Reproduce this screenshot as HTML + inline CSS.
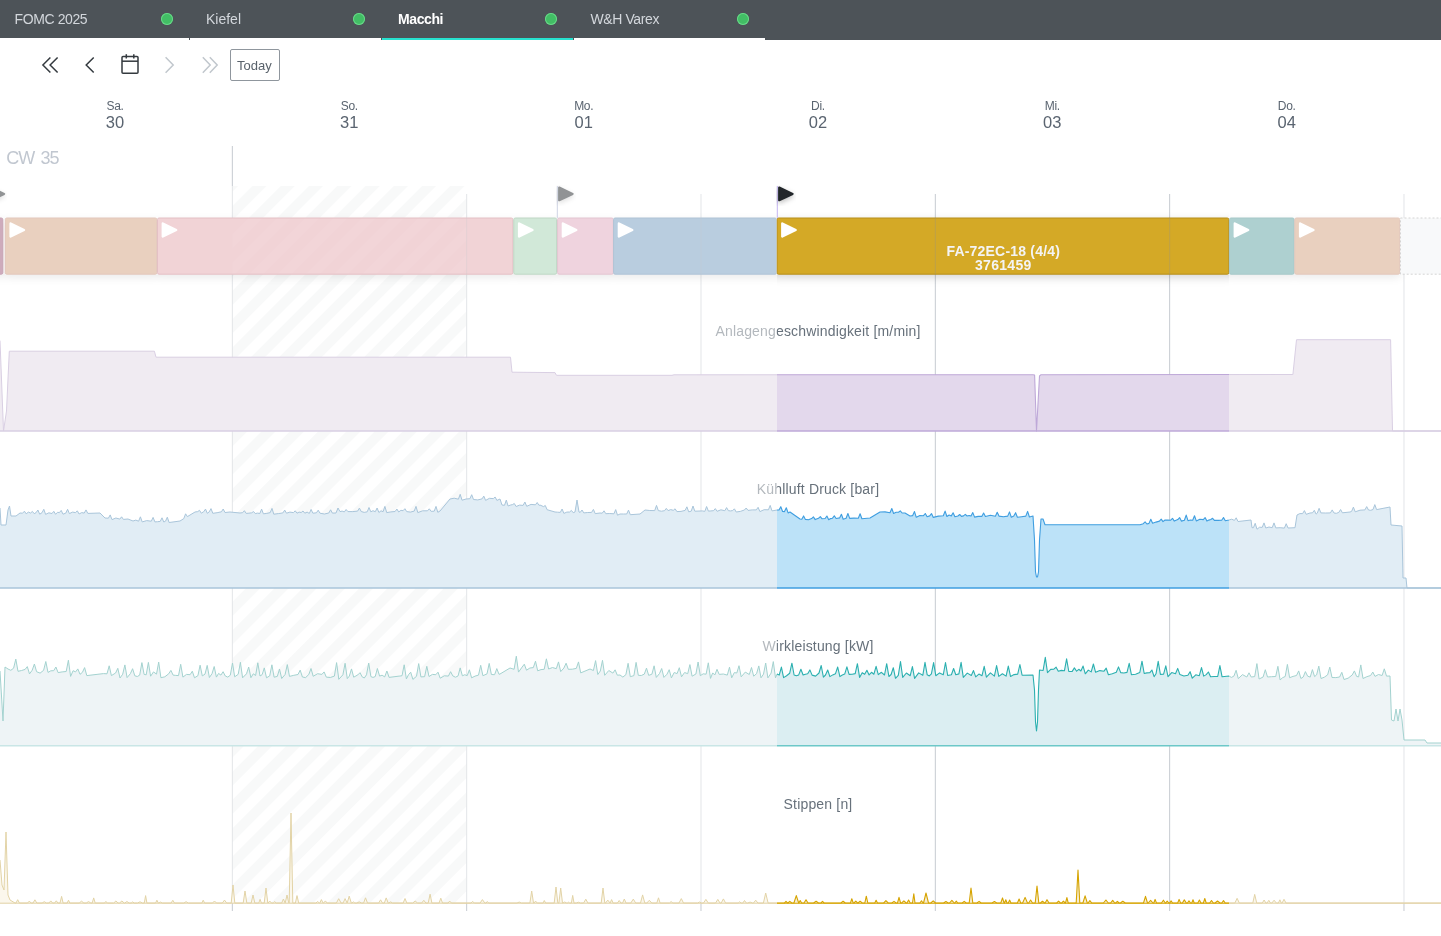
<!DOCTYPE html>
<html><head><meta charset="utf-8"><style>
html,body{margin:0;padding:0;}
body{will-change:transform;}
body{width:1441px;height:936px;overflow:hidden;position:relative;background:#fff;font-family:"Liberation Sans",sans-serif;}
.hdr{position:absolute;left:0;top:0;width:1441px;height:40px;background:#4d5358;}
.tab{position:absolute;top:0;height:38px;border-bottom:2px solid #fff;}
.tab.act{border-bottom-color:#27e2cf;}
.tt{position:absolute;top:11px;font-size:14px;line-height:16px;color:#d3d7dc;white-space:nowrap;letter-spacing:-0.4px;}
.act .tt{color:#fff;font-weight:bold;}
.dot{position:absolute;top:13px;width:12px;height:12px;border-radius:50%;background:#42be65;box-shadow:inset 0 0 0 1px #6ad88a;}
.dn{position:absolute;width:60px;text-align:center;color:#5a6470;white-space:nowrap;}
.dn1{top:99.5px;font-size:12px;line-height:13px;letter-spacing:-0.3px;}
.dn2{top:113.3px;font-size:16.5px;line-height:18px;}
</style></head><body>
<div class="hdr">
<div class="tab" style="left:0;width:189px"><span class="tt" style="left:14.6px">FOMC 2025</span><span class="dot" style="left:161px"></span></div>
<div class="tab" style="left:190px;width:191px"><span class="tt" style="left:16px;letter-spacing:0">Kiefel</span><span class="dot" style="left:163px"></span></div>
<div class="tab act" style="left:382px;width:191px"><span class="tt" style="left:16px">Macchi</span><span class="dot" style="left:163px"></span></div>
<div class="tab" style="left:574px;width:191px"><span class="tt" style="left:16.5px">W&amp;H Varex</span><span class="dot" style="left:163px"></span></div>
</div>
<svg width="300" height="50" viewBox="0 40 300 50" style="position:absolute;left:0;top:40px">
<g fill="none" stroke="#343a3f" stroke-width="1.5" stroke-linecap="butt" stroke-linejoin="miter">
<polyline points="50.4,57.5 42.9,65 50.4,72.5"/>
<polyline points="57.6,57.5 50.1,65 57.6,72.5"/>
<polyline points="93.7,57.5 86.2,65 93.7,72.5"/>
<rect x="122" y="56.5" width="16" height="16.8" rx="1"/>
<line x1="122" y1="61.2" x2="138" y2="61.2"/>
<line x1="126.3" y1="54.2" x2="126.3" y2="58.5"/>
<line x1="133.8" y1="54.2" x2="133.8" y2="58.5"/>
</g>
<g fill="none" stroke="#c1c7cd" stroke-width="1.5">
<polyline points="165.6,57.3 173.2,65 165.6,72.7"/>
<polyline points="202.8,57.3 210.2,65 202.8,72.7"/>
<polyline points="209.8,57.3 217.2,65 209.8,72.7"/>
</g>
<rect x="230.5" y="49.5" width="49" height="31" rx="1.5" fill="#fff" stroke="#8f969d" stroke-width="1"/>
<text x="237" y="69.8" font-family="Liberation Sans" font-size="13" fill="#59626b">Today</text>
</svg>
<div class="dn dn1" style="left:85.0px">Sa.</div><div class="dn dn2" style="left:85.0px">30</div>
<div class="dn dn1" style="left:319.3px">So.</div><div class="dn dn2" style="left:319.3px">31</div>
<div class="dn dn1" style="left:553.7px">Mo.</div><div class="dn dn2" style="left:553.7px">01</div>
<div class="dn dn1" style="left:788.0px">Di.</div><div class="dn dn2" style="left:788.0px">02</div>
<div class="dn dn1" style="left:1022.3px">Mi.</div><div class="dn dn2" style="left:1022.3px">03</div>
<div class="dn dn1" style="left:1256.7px">Do.</div><div class="dn dn2" style="left:1256.7px">04</div>
<div style="position:absolute;left:6.3px;top:148px;font-size:18px;line-height:20px;letter-spacing:-1.1px;word-spacing:2.5px;color:#c1c7d0">CW 35</div>
<svg id="main" width="1441" height="936" viewBox="0 0 1441 936" style="position:absolute;left:0;top:0">
<defs>
<pattern id="hatch" patternUnits="userSpaceOnUse" width="20" height="20" patternTransform="rotate(45)"><rect x="10" y="0" width="10" height="20" fill="#f1f3f3"/></pattern>
<clipPath id="csel"><rect x="777" y="0" width="452" height="936"/></clipPath>
<clipPath id="cun"><rect x="0" y="0" width="777" height="936"/><rect x="1229" y="0" width="212" height="936"/></clipPath>
<filter id="fsh" x="-20%" y="-20%" width="140%" height="160%"><feDropShadow dx="0" dy="2" stdDeviation="2.5" flood-color="#000" flood-opacity="0.25"/></filter>
<filter id="bsh" x="-5%" y="-40%" width="110%" height="200%"><feDropShadow dx="0" dy="3" stdDeviation="4" flood-color="#000" flood-opacity="0.16"/></filter>
</defs>
<rect x="232.5" y="186" width="234" height="717" fill="url(#hatch)"/>
<line x1="232.33" y1="146" x2="232.33" y2="911" stroke="#c6cbd1" stroke-width="1"/>
<line x1="466.66" y1="194" x2="466.66" y2="911" stroke="#c6cbd1" stroke-width="1"/>
<line x1="700.99" y1="194" x2="700.99" y2="911" stroke="#c6cbd1" stroke-width="1"/>
<line x1="935.32" y1="194" x2="935.32" y2="911" stroke="#c6cbd1" stroke-width="1"/>
<line x1="1169.65" y1="194" x2="1169.65" y2="911" stroke="#c6cbd1" stroke-width="1"/>
<line x1="1403.98" y1="194" x2="1403.98" y2="911" stroke="#c6cbd1" stroke-width="1"/>
<g filter="url(#bsh)">
<rect x="-10" y="218.0" width="12.8" height="56.19999999999999" rx="1.5" fill="#9d5779" stroke="#8f4a6c" stroke-width="1"/>
<rect x="5.3" y="218.0" width="151.5" height="56.19999999999999" rx="1.5" fill="#d3a17f" stroke="#c58f78" stroke-width="1"/>
<rect x="157.5" y="218.0" width="355.4" height="56.19999999999999" rx="1.5" fill="#e3a6ad" stroke="#c8808a" stroke-width="1"/>
<rect x="513.8" y="218.0" width="42.8" height="56.19999999999999" rx="1.5" fill="#a3d1b1" stroke="#7fae8a" stroke-width="1"/>
<rect x="557.6" y="218.0" width="55.7" height="56.19999999999999" rx="1.5" fill="#dfa7bd" stroke="#c68aa2" stroke-width="1"/>
<rect x="613.6" y="218.0" width="162.9" height="56.19999999999999" rx="1.5" fill="#739bbf" stroke="#6187ab" stroke-width="1"/>
<rect x="777.0" y="218.0" width="451.8" height="56.19999999999999" rx="1.5" fill="#d4a927" stroke="#b58d1c" stroke-width="1"/>
<rect x="1229.5" y="218.0" width="64.6" height="56.19999999999999" rx="1.5" fill="#5da1a1" stroke="#4f9090" stroke-width="1"/>
<rect x="1294.8" y="218.0" width="104.9" height="56.19999999999999" rx="1.5" fill="#d3a17f" stroke="#c58f78" stroke-width="1"/>
</g>
<rect x="232.33" y="218.5" width="234.33" height="55.19999999999999" fill="url(#hatch)" opacity="0.05"/>
<line x1="466.66" y1="218.0" x2="466.66" y2="274.2" stroke="#8a8f96" stroke-width="1" opacity="0.3"/>
<line x1="700.99" y1="218.0" x2="700.99" y2="274.2" stroke="#8a8f96" stroke-width="1" opacity="0.3"/>
<line x1="935.32" y1="218.0" x2="935.32" y2="274.2" stroke="#8a8f96" stroke-width="1" opacity="0.3"/>
<line x1="1169.65" y1="218.0" x2="1169.65" y2="274.2" stroke="#8a8f96" stroke-width="1" opacity="0.3"/>
<line x1="1403.98" y1="218.0" x2="1403.98" y2="274.2" stroke="#8a8f96" stroke-width="1" opacity="0.3"/>
<rect x="1400.5" y="218.0" width="60" height="56.19999999999999" fill="#f1f3f5" stroke="#a8a8a8" stroke-width="1" stroke-dasharray="2,2"/>
<path d="M10.599999999999998,223.5 L24.0,230.0 L10.599999999999998,236.5 Z" fill="#fff" stroke="#fff" stroke-width="2.4" stroke-linejoin="round"/>
<path d="M162.79999999999998,223.5 L176.2,230.0 L162.79999999999998,236.5 Z" fill="#fff" stroke="#fff" stroke-width="2.4" stroke-linejoin="round"/>
<path d="M519.1,223.5 L532.5,230.0 L519.1,236.5 Z" fill="#fff" stroke="#fff" stroke-width="2.4" stroke-linejoin="round"/>
<path d="M562.9000000000001,223.5 L576.3000000000001,230.0 L562.9000000000001,236.5 Z" fill="#fff" stroke="#fff" stroke-width="2.4" stroke-linejoin="round"/>
<path d="M618.9000000000001,223.5 L632.3000000000001,230.0 L618.9000000000001,236.5 Z" fill="#fff" stroke="#fff" stroke-width="2.4" stroke-linejoin="round"/>
<path d="M782.3000000000001,223.5 L795.7,230.0 L782.3000000000001,236.5 Z" fill="#fff" stroke="#fff" stroke-width="2.4" stroke-linejoin="round"/>
<path d="M1234.8,223.5 L1248.1999999999998,230.0 L1234.8,236.5 Z" fill="#fff" stroke="#fff" stroke-width="2.4" stroke-linejoin="round"/>
<path d="M1300.1,223.5 L1313.4999999999998,230.0 L1300.1,236.5 Z" fill="#fff" stroke="#fff" stroke-width="2.4" stroke-linejoin="round"/>
<text x="1003.3" y="255.5" text-anchor="middle" font-family="Liberation Sans" font-weight="bold" font-size="14" letter-spacing="0.2" fill="#f4f4f4">FA-72EC-18 (4/4)</text>
<text x="1003.3" y="269.8" text-anchor="middle" font-family="Liberation Sans" font-weight="bold" font-size="14" letter-spacing="0.3" fill="#f4f4f4">3761459</text>
<line x1="-11.2" y1="186" x2="-11.2" y2="218" stroke="#9ea8c9" stroke-width="1"/>
<path filter="url(#fsh)" d="M-9.3,187.6 L4.1,193.9 L-9.3,200.2 Z" fill="#21272a" stroke="#21272a" stroke-width="2.2" stroke-linejoin="round"/>
<line x1="557.3" y1="186" x2="557.3" y2="218" stroke="#9ea8c9" stroke-width="1"/>
<path filter="url(#fsh)" d="M559.2,187.6 L572.6,193.9 L559.2,200.2 Z" fill="#21272a" stroke="#21272a" stroke-width="2.2" stroke-linejoin="round"/>
<text x="818" y="335.8" text-anchor="middle" font-family="Liberation Sans" font-size="14" letter-spacing="0.17" fill="#67717b">Anlagengeschwindigkeit [m/min]</text>
<text x="818" y="493.6" text-anchor="middle" font-family="Liberation Sans" font-size="14" letter-spacing="0.17" fill="#67717b">Kühlluft Druck [bar]</text>
<text x="818" y="651.0" text-anchor="middle" font-family="Liberation Sans" font-size="14" letter-spacing="0.17" fill="#67717b">Wirkleistung [kW]</text>
<text x="818" y="808.8" text-anchor="middle" font-family="Liberation Sans" font-size="14" letter-spacing="0.17" fill="#67717b">Stippen [n]</text>
<rect x="0" y="186" width="777" height="717" fill="#fff" fill-opacity="0.5"/>
<rect x="1229" y="186" width="212" height="717" fill="#fff" fill-opacity="0.5"/>
<line x1="777.3" y1="186" x2="777.3" y2="218" stroke="#c4b4f2" stroke-width="1"/>
<path filter="url(#fsh)" d="M779.2,187.6 L792.6,193.9 L779.2,200.2 Z" fill="#21272a" stroke="#21272a" stroke-width="2.2" stroke-linejoin="round"/>
<g clip-path="url(#cun)"><path d="M0.0,340.6 L3.5,431.0 L6.5,411.0 L9.3,351.2 L154.4,351.2 L156.0,357.2 L510.5,357.2 L512.0,372.2 L555.0,372.6 L556.5,375.3 L672.0,375.3 L674.0,374.8 L1033.0,374.7 L1034.6,375.0 L1036.5,431.0 L1039.5,376.0 L1041.0,374.7 L1292.9,374.5 L1296.5,339.7 L1390.6,339.7 L1392.5,431.0 L1441.0,431.0 L1441.0,431 L0.0,431 Z" fill="#f0ebf2"/><path d="M0.0,340.6 L3.5,431.0 L6.5,411.0 L9.3,351.2 L154.4,351.2 L156.0,357.2 L510.5,357.2 L512.0,372.2 L555.0,372.6 L556.5,375.3 L672.0,375.3 L674.0,374.8 L1033.0,374.7 L1034.6,375.0 L1036.5,431.0 L1039.5,376.0 L1041.0,374.7 L1292.9,374.5 L1296.5,339.7 L1390.6,339.7 L1392.5,431.0 L1441.0,431.0" fill="none" stroke="#d9cfe3" stroke-width="1" stroke-linejoin="round"/><line x1="0" y1="431" x2="1441" y2="431" stroke="#d9cfe3" stroke-width="1.5"/></g>
<g clip-path="url(#csel)"><path d="M0.0,340.6 L3.5,431.0 L6.5,411.0 L9.3,351.2 L154.4,351.2 L156.0,357.2 L510.5,357.2 L512.0,372.2 L555.0,372.6 L556.5,375.3 L672.0,375.3 L674.0,374.8 L1033.0,374.7 L1034.6,375.0 L1036.5,431.0 L1039.5,376.0 L1041.0,374.7 L1292.9,374.5 L1296.5,339.7 L1390.6,339.7 L1392.5,431.0 L1441.0,431.0 L1441.0,431 L0.0,431 Z" fill="#e3d8ec"/><path d="M0.0,340.6 L3.5,431.0 L6.5,411.0 L9.3,351.2 L154.4,351.2 L156.0,357.2 L510.5,357.2 L512.0,372.2 L555.0,372.6 L556.5,375.3 L672.0,375.3 L674.0,374.8 L1033.0,374.7 L1034.6,375.0 L1036.5,431.0 L1039.5,376.0 L1041.0,374.7 L1292.9,374.5 L1296.5,339.7 L1390.6,339.7 L1392.5,431.0 L1441.0,431.0" fill="none" stroke="#bea8d8" stroke-width="1.1" stroke-linejoin="round"/><line x1="0" y1="431" x2="1441" y2="431" stroke="#bea8d8" stroke-width="1.6"/></g>
<g clip-path="url(#cun)"><path d="M0.0,508.0 L1.0,525.0 L6.0,525.0 L8.0,510.0 L9.5,506.0 L11.0,516.0 L16.0,516.0 L20.0,513.0 L22.6,513.2 L24.4,511.2 L26.2,513.8 L28.4,512.1 L30.6,513.0 L32.4,511.4 L34.2,513.7 L36.1,512.6 L37.9,510.0 L39.7,514.2 L42.0,512.7 L43.8,509.3 L45.6,514.4 L48.8,512.8 L52.0,513.5 L53.8,511.3 L55.6,514.3 L57.5,512.3 L59.4,512.6 L61.2,510.4 L63.0,514.2 L65.8,513.1 L67.6,509.3 L69.4,513.6 L72.5,512.1 L75.5,512.6 L77.3,510.8 L79.1,514.0 L81.7,512.6 L84.2,513.1 L86.0,509.9 L87.8,513.4 L100.0,513.0 L105.0,518.0 L108.4,518.2 L110.2,514.9 L112.0,519.6 L115.9,518.0 L119.8,519.1 L121.6,516.8 L123.4,519.4 L128.0,519.0 L133.0,521.0 L135.8,520.1 L138.6,521.2 L140.4,516.8 L142.2,521.9 L146.7,520.6 L151.3,521.2 L153.1,517.4 L154.9,521.9 L157.5,521.7 L160.2,521.4 L162.0,517.8 L163.8,522.0 L165.5,521.2 L167.3,517.2 L169.1,522.5 L180.0,521.0 L183.8,518.6 L185.6,513.8 L187.4,516.6 L195.0,512.0 L197.7,511.6 L199.5,510.3 L201.3,513.2 L203.7,511.7 L205.5,509.1 L207.3,513.3 L209.2,511.9 L211.0,508.6 L212.8,513.3 L217.1,512.7 L221.4,511.8 L223.2,509.0 L225.0,512.5 L230.0,512.0 L240.0,513.0 L242.6,512.7 L244.4,510.7 L246.2,513.4 L248.9,513.2 L251.7,512.8 L253.5,511.5 L255.3,513.6 L257.6,513.1 L259.8,513.5 L261.6,509.1 L263.4,513.8 L266.8,513.4 L270.2,512.6 L272.0,508.4 L273.8,514.2 L278.3,513.6 L282.9,512.9 L284.7,510.1 L286.5,513.2 L289.9,512.1 L293.4,512.6 L295.2,510.8 L297.0,513.2 L299.1,512.1 L301.2,512.5 L303.0,511.0 L304.8,513.2 L307.1,512.1 L309.3,513.4 L311.1,509.4 L312.9,513.2 L316.4,512.8 L318.2,510.2 L320.0,513.2 L324.4,514.0 L328.8,513.0 L330.6,509.8 L332.4,513.1 L336.0,513.0 L338.0,508.0 L340.0,511.6 L342.1,511.1 L344.3,511.9 L346.1,509.5 L347.9,511.6 L352.8,511.6 L357.6,511.1 L359.4,508.1 L361.2,511.5 L364.2,512.4 L367.2,511.8 L369.0,507.5 L370.8,511.8 L373.0,510.7 L375.3,511.7 L377.1,508.0 L378.9,512.5 L381.0,510.8 L383.1,511.7 L384.9,506.4 L386.7,512.6 L390.9,511.9 L395.1,511.5 L396.9,509.0 L398.7,512.0 L400.9,510.3 L403.1,510.7 L404.9,508.7 L406.7,511.6 L410.4,512.1 L414.2,511.1 L416.0,506.4 L417.8,512.6 L422.6,510.8 L427.5,510.8 L429.3,508.8 L431.1,511.3 L434.2,511.2 L436.0,506.4 L437.8,512.3 L440.0,511.0 L450.0,499.0 L454.2,498.2 L458.4,499.2 L460.2,494.3 L462.0,500.2 L466.0,499.0 L469.9,498.7 L471.7,494.7 L473.5,499.5 L477.8,499.9 L482.0,498.9 L483.8,496.1 L485.6,500.4 L489.4,498.3 L493.3,498.6 L495.1,497.0 L496.9,500.4 L500.0,499.0 L502.0,505.0 L504.5,505.3 L506.3,500.1 L508.1,506.0 L510.3,505.1 L512.5,504.6 L514.3,503.5 L516.1,506.5 L519.6,505.1 L523.1,505.4 L524.9,502.0 L526.7,506.3 L531.0,504.4 L535.4,504.8 L537.2,502.5 L539.0,505.4 L540.0,505.0 L543.5,506.6 L545.3,505.5 L547.1,509.7 L555.0,512.0 L557.7,512.2 L560.3,512.4 L562.1,509.0 L563.9,513.4 L566.8,512.1 L569.6,512.0 L571.4,510.4 L573.2,512.7 L575.0,512.0 L577.0,500.0 L579.0,512.0 L580.2,512.4 L582.0,510.0 L583.8,512.9 L587.7,512.5 L591.6,512.4 L593.4,509.4 L595.2,513.6 L600.0,513.0 L602.2,513.2 L604.0,510.8 L605.8,513.7 L609.8,513.5 L613.9,513.8 L615.7,509.6 L617.5,515.2 L620.0,514.0 L623.4,514.0 L626.7,514.0 L628.5,510.1 L630.3,514.7 L640.0,514.0 L645.0,510.0 L649.8,510.5 L654.7,510.6 L656.5,505.4 L658.3,510.6 L661.4,511.2 L664.5,510.7 L666.3,508.4 L668.1,510.6 L670.7,509.6 L673.3,510.3 L675.1,508.8 L676.9,511.6 L681.0,511.4 L685.1,510.4 L686.9,506.8 L688.7,511.8 L691.2,511.2 L693.0,506.0 L694.8,511.2 L700.0,511.0 L702.4,510.9 L704.8,511.4 L706.6,506.5 L708.4,511.1 L710.9,510.9 L713.5,510.7 L715.3,508.6 L717.1,511.3 L720.9,509.8 L724.8,510.7 L726.6,507.6 L728.4,510.7 L730.5,510.9 L732.6,510.6 L734.4,508.8 L736.2,512.0 L740.3,511.4 L744.4,510.0 L746.2,508.0 L748.0,510.4 L752.2,509.9 L756.3,509.9 L758.1,507.3 L759.9,511.6 L764.1,509.7 L768.4,509.8 L770.2,505.4 L772.0,510.9 L777.0,510.0 L779.0,509.9 L780.8,506.7 L782.6,511.5 L784.5,511.6 L786.3,507.7 L788.1,512.9 L790.0,512.0 L800.0,519.0 L801.8,519.3 L803.6,515.9 L805.4,519.4 L808.5,519.7 L811.6,518.6 L813.4,516.9 L815.2,519.6 L818.5,518.3 L820.3,516.6 L822.1,518.8 L825.1,518.5 L826.9,516.0 L828.7,519.7 L830.6,518.6 L832.5,518.2 L834.3,515.8 L836.1,518.5 L839.6,517.9 L841.4,514.3 L843.2,519.2 L846.1,518.3 L847.9,513.5 L849.7,518.4 L854.0,518.1 L858.3,518.2 L860.1,513.7 L861.9,518.7 L870.0,518.0 L880.0,512.0 L885.0,511.9 L890.0,512.7 L891.8,508.5 L893.6,513.5 L896.1,512.3 L898.5,512.3 L900.3,510.9 L902.1,513.0 L905.0,513.0 L910.0,516.0 L912.7,515.6 L914.5,511.6 L916.3,517.3 L919.9,515.6 L923.5,515.7 L925.3,513.5 L927.1,516.7 L929.7,515.9 L931.5,513.6 L933.3,517.4 L938.3,516.1 L943.3,515.7 L945.1,511.1 L946.9,516.5 L949.1,515.0 L951.3,515.9 L953.1,512.8 L954.9,516.8 L957.9,516.0 L959.7,514.5 L961.5,516.4 L963.5,515.9 L965.3,514.4 L967.1,516.0 L969.1,515.5 L971.0,516.1 L972.8,512.6 L974.6,517.1 L978.2,516.4 L981.8,516.4 L983.6,513.1 L985.4,516.5 L990.4,515.3 L995.4,516.2 L997.2,512.2 L999.0,516.1 L1003.4,516.8 L1007.7,516.1 L1009.5,511.9 L1011.3,517.2 L1013.8,516.0 L1015.6,512.7 L1017.4,517.3 L1021.6,516.7 L1025.8,516.1 L1027.6,511.4 L1029.4,517.0 L1033.0,516.0 L1034.5,540.0 L1035.5,572.0 L1036.5,577.0 L1037.5,577.0 L1038.5,572.0 L1039.5,540.0 L1041.0,519.0 L1043.0,519.0 L1045.0,524.8 L1140.0,524.8 L1143.3,523.7 L1145.1,521.9 L1146.9,524.0 L1149.0,523.4 L1150.8,519.3 L1152.6,523.3 L1156.0,522.1 L1159.4,521.1 L1161.2,519.2 L1163.0,521.6 L1165.0,520.0 L1167.9,520.1 L1170.7,520.2 L1172.5,518.3 L1174.3,521.1 L1177.8,519.6 L1179.6,517.6 L1181.4,521.1 L1184.4,520.2 L1186.2,515.1 L1188.0,520.7 L1190.4,520.0 L1192.7,520.2 L1194.5,515.8 L1196.3,520.9 L1199.8,519.2 L1203.3,519.6 L1205.1,517.6 L1206.9,521.1 L1208.8,520.1 L1210.8,519.5 L1212.6,518.3 L1214.4,520.4 L1218.0,520.4 L1221.7,520.2 L1223.5,517.5 L1225.3,520.8 L1229.0,520.0 L1231.7,519.2 L1234.4,520.4 L1236.2,517.8 L1238.0,521.5 L1251.0,520.0 L1252.0,527.7 L1253.4,527.7 L1255.2,523.3 L1257.0,529.2 L1259.6,527.2 L1262.2,527.4 L1264.0,522.9 L1265.8,528.0 L1269.0,527.0 L1272.2,527.7 L1274.0,522.9 L1275.8,527.9 L1280.1,527.7 L1284.4,528.1 L1286.2,523.7 L1288.0,528.0 L1295.0,527.7 L1297.0,515.0 L1299.8,513.6 L1302.6,513.6 L1304.4,510.6 L1306.2,514.3 L1310.0,513.0 L1312.5,512.8 L1314.3,510.3 L1316.1,514.1 L1317.3,513.1 L1319.1,508.3 L1320.9,512.9 L1325.7,513.0 L1330.4,512.9 L1332.2,509.9 L1334.0,513.0 L1336.4,513.3 L1338.8,512.4 L1340.6,509.5 L1342.4,512.8 L1350.0,512.0 L1351.6,511.4 L1353.4,507.1 L1355.2,511.8 L1360.0,510.2 L1364.9,509.9 L1366.7,506.6 L1368.5,510.0 L1370.7,510.3 L1373.0,509.5 L1374.8,504.6 L1376.6,509.6 L1390.0,507.0 L1391.0,525.0 L1402.0,526.0 L1403.0,578.0 L1406.0,578.0 L1407.0,588.0 L1441.0,588.0 L1441.0,588 L0.0,588 Z" fill="#e1edf5"/><path d="M0.0,508.0 L1.0,525.0 L6.0,525.0 L8.0,510.0 L9.5,506.0 L11.0,516.0 L16.0,516.0 L20.0,513.0 L22.6,513.2 L24.4,511.2 L26.2,513.8 L28.4,512.1 L30.6,513.0 L32.4,511.4 L34.2,513.7 L36.1,512.6 L37.9,510.0 L39.7,514.2 L42.0,512.7 L43.8,509.3 L45.6,514.4 L48.8,512.8 L52.0,513.5 L53.8,511.3 L55.6,514.3 L57.5,512.3 L59.4,512.6 L61.2,510.4 L63.0,514.2 L65.8,513.1 L67.6,509.3 L69.4,513.6 L72.5,512.1 L75.5,512.6 L77.3,510.8 L79.1,514.0 L81.7,512.6 L84.2,513.1 L86.0,509.9 L87.8,513.4 L100.0,513.0 L105.0,518.0 L108.4,518.2 L110.2,514.9 L112.0,519.6 L115.9,518.0 L119.8,519.1 L121.6,516.8 L123.4,519.4 L128.0,519.0 L133.0,521.0 L135.8,520.1 L138.6,521.2 L140.4,516.8 L142.2,521.9 L146.7,520.6 L151.3,521.2 L153.1,517.4 L154.9,521.9 L157.5,521.7 L160.2,521.4 L162.0,517.8 L163.8,522.0 L165.5,521.2 L167.3,517.2 L169.1,522.5 L180.0,521.0 L183.8,518.6 L185.6,513.8 L187.4,516.6 L195.0,512.0 L197.7,511.6 L199.5,510.3 L201.3,513.2 L203.7,511.7 L205.5,509.1 L207.3,513.3 L209.2,511.9 L211.0,508.6 L212.8,513.3 L217.1,512.7 L221.4,511.8 L223.2,509.0 L225.0,512.5 L230.0,512.0 L240.0,513.0 L242.6,512.7 L244.4,510.7 L246.2,513.4 L248.9,513.2 L251.7,512.8 L253.5,511.5 L255.3,513.6 L257.6,513.1 L259.8,513.5 L261.6,509.1 L263.4,513.8 L266.8,513.4 L270.2,512.6 L272.0,508.4 L273.8,514.2 L278.3,513.6 L282.9,512.9 L284.7,510.1 L286.5,513.2 L289.9,512.1 L293.4,512.6 L295.2,510.8 L297.0,513.2 L299.1,512.1 L301.2,512.5 L303.0,511.0 L304.8,513.2 L307.1,512.1 L309.3,513.4 L311.1,509.4 L312.9,513.2 L316.4,512.8 L318.2,510.2 L320.0,513.2 L324.4,514.0 L328.8,513.0 L330.6,509.8 L332.4,513.1 L336.0,513.0 L338.0,508.0 L340.0,511.6 L342.1,511.1 L344.3,511.9 L346.1,509.5 L347.9,511.6 L352.8,511.6 L357.6,511.1 L359.4,508.1 L361.2,511.5 L364.2,512.4 L367.2,511.8 L369.0,507.5 L370.8,511.8 L373.0,510.7 L375.3,511.7 L377.1,508.0 L378.9,512.5 L381.0,510.8 L383.1,511.7 L384.9,506.4 L386.7,512.6 L390.9,511.9 L395.1,511.5 L396.9,509.0 L398.7,512.0 L400.9,510.3 L403.1,510.7 L404.9,508.7 L406.7,511.6 L410.4,512.1 L414.2,511.1 L416.0,506.4 L417.8,512.6 L422.6,510.8 L427.5,510.8 L429.3,508.8 L431.1,511.3 L434.2,511.2 L436.0,506.4 L437.8,512.3 L440.0,511.0 L450.0,499.0 L454.2,498.2 L458.4,499.2 L460.2,494.3 L462.0,500.2 L466.0,499.0 L469.9,498.7 L471.7,494.7 L473.5,499.5 L477.8,499.9 L482.0,498.9 L483.8,496.1 L485.6,500.4 L489.4,498.3 L493.3,498.6 L495.1,497.0 L496.9,500.4 L500.0,499.0 L502.0,505.0 L504.5,505.3 L506.3,500.1 L508.1,506.0 L510.3,505.1 L512.5,504.6 L514.3,503.5 L516.1,506.5 L519.6,505.1 L523.1,505.4 L524.9,502.0 L526.7,506.3 L531.0,504.4 L535.4,504.8 L537.2,502.5 L539.0,505.4 L540.0,505.0 L543.5,506.6 L545.3,505.5 L547.1,509.7 L555.0,512.0 L557.7,512.2 L560.3,512.4 L562.1,509.0 L563.9,513.4 L566.8,512.1 L569.6,512.0 L571.4,510.4 L573.2,512.7 L575.0,512.0 L577.0,500.0 L579.0,512.0 L580.2,512.4 L582.0,510.0 L583.8,512.9 L587.7,512.5 L591.6,512.4 L593.4,509.4 L595.2,513.6 L600.0,513.0 L602.2,513.2 L604.0,510.8 L605.8,513.7 L609.8,513.5 L613.9,513.8 L615.7,509.6 L617.5,515.2 L620.0,514.0 L623.4,514.0 L626.7,514.0 L628.5,510.1 L630.3,514.7 L640.0,514.0 L645.0,510.0 L649.8,510.5 L654.7,510.6 L656.5,505.4 L658.3,510.6 L661.4,511.2 L664.5,510.7 L666.3,508.4 L668.1,510.6 L670.7,509.6 L673.3,510.3 L675.1,508.8 L676.9,511.6 L681.0,511.4 L685.1,510.4 L686.9,506.8 L688.7,511.8 L691.2,511.2 L693.0,506.0 L694.8,511.2 L700.0,511.0 L702.4,510.9 L704.8,511.4 L706.6,506.5 L708.4,511.1 L710.9,510.9 L713.5,510.7 L715.3,508.6 L717.1,511.3 L720.9,509.8 L724.8,510.7 L726.6,507.6 L728.4,510.7 L730.5,510.9 L732.6,510.6 L734.4,508.8 L736.2,512.0 L740.3,511.4 L744.4,510.0 L746.2,508.0 L748.0,510.4 L752.2,509.9 L756.3,509.9 L758.1,507.3 L759.9,511.6 L764.1,509.7 L768.4,509.8 L770.2,505.4 L772.0,510.9 L777.0,510.0 L779.0,509.9 L780.8,506.7 L782.6,511.5 L784.5,511.6 L786.3,507.7 L788.1,512.9 L790.0,512.0 L800.0,519.0 L801.8,519.3 L803.6,515.9 L805.4,519.4 L808.5,519.7 L811.6,518.6 L813.4,516.9 L815.2,519.6 L818.5,518.3 L820.3,516.6 L822.1,518.8 L825.1,518.5 L826.9,516.0 L828.7,519.7 L830.6,518.6 L832.5,518.2 L834.3,515.8 L836.1,518.5 L839.6,517.9 L841.4,514.3 L843.2,519.2 L846.1,518.3 L847.9,513.5 L849.7,518.4 L854.0,518.1 L858.3,518.2 L860.1,513.7 L861.9,518.7 L870.0,518.0 L880.0,512.0 L885.0,511.9 L890.0,512.7 L891.8,508.5 L893.6,513.5 L896.1,512.3 L898.5,512.3 L900.3,510.9 L902.1,513.0 L905.0,513.0 L910.0,516.0 L912.7,515.6 L914.5,511.6 L916.3,517.3 L919.9,515.6 L923.5,515.7 L925.3,513.5 L927.1,516.7 L929.7,515.9 L931.5,513.6 L933.3,517.4 L938.3,516.1 L943.3,515.7 L945.1,511.1 L946.9,516.5 L949.1,515.0 L951.3,515.9 L953.1,512.8 L954.9,516.8 L957.9,516.0 L959.7,514.5 L961.5,516.4 L963.5,515.9 L965.3,514.4 L967.1,516.0 L969.1,515.5 L971.0,516.1 L972.8,512.6 L974.6,517.1 L978.2,516.4 L981.8,516.4 L983.6,513.1 L985.4,516.5 L990.4,515.3 L995.4,516.2 L997.2,512.2 L999.0,516.1 L1003.4,516.8 L1007.7,516.1 L1009.5,511.9 L1011.3,517.2 L1013.8,516.0 L1015.6,512.7 L1017.4,517.3 L1021.6,516.7 L1025.8,516.1 L1027.6,511.4 L1029.4,517.0 L1033.0,516.0 L1034.5,540.0 L1035.5,572.0 L1036.5,577.0 L1037.5,577.0 L1038.5,572.0 L1039.5,540.0 L1041.0,519.0 L1043.0,519.0 L1045.0,524.8 L1140.0,524.8 L1143.3,523.7 L1145.1,521.9 L1146.9,524.0 L1149.0,523.4 L1150.8,519.3 L1152.6,523.3 L1156.0,522.1 L1159.4,521.1 L1161.2,519.2 L1163.0,521.6 L1165.0,520.0 L1167.9,520.1 L1170.7,520.2 L1172.5,518.3 L1174.3,521.1 L1177.8,519.6 L1179.6,517.6 L1181.4,521.1 L1184.4,520.2 L1186.2,515.1 L1188.0,520.7 L1190.4,520.0 L1192.7,520.2 L1194.5,515.8 L1196.3,520.9 L1199.8,519.2 L1203.3,519.6 L1205.1,517.6 L1206.9,521.1 L1208.8,520.1 L1210.8,519.5 L1212.6,518.3 L1214.4,520.4 L1218.0,520.4 L1221.7,520.2 L1223.5,517.5 L1225.3,520.8 L1229.0,520.0 L1231.7,519.2 L1234.4,520.4 L1236.2,517.8 L1238.0,521.5 L1251.0,520.0 L1252.0,527.7 L1253.4,527.7 L1255.2,523.3 L1257.0,529.2 L1259.6,527.2 L1262.2,527.4 L1264.0,522.9 L1265.8,528.0 L1269.0,527.0 L1272.2,527.7 L1274.0,522.9 L1275.8,527.9 L1280.1,527.7 L1284.4,528.1 L1286.2,523.7 L1288.0,528.0 L1295.0,527.7 L1297.0,515.0 L1299.8,513.6 L1302.6,513.6 L1304.4,510.6 L1306.2,514.3 L1310.0,513.0 L1312.5,512.8 L1314.3,510.3 L1316.1,514.1 L1317.3,513.1 L1319.1,508.3 L1320.9,512.9 L1325.7,513.0 L1330.4,512.9 L1332.2,509.9 L1334.0,513.0 L1336.4,513.3 L1338.8,512.4 L1340.6,509.5 L1342.4,512.8 L1350.0,512.0 L1351.6,511.4 L1353.4,507.1 L1355.2,511.8 L1360.0,510.2 L1364.9,509.9 L1366.7,506.6 L1368.5,510.0 L1370.7,510.3 L1373.0,509.5 L1374.8,504.6 L1376.6,509.6 L1390.0,507.0 L1391.0,525.0 L1402.0,526.0 L1403.0,578.0 L1406.0,578.0 L1407.0,588.0 L1441.0,588.0" fill="none" stroke="#a9c5da" stroke-width="1" stroke-linejoin="round"/><line x1="0" y1="588" x2="1441" y2="588" stroke="#a9c5da" stroke-width="1.5"/></g>
<g clip-path="url(#csel)"><path d="M0.0,508.0 L1.0,525.0 L6.0,525.0 L8.0,510.0 L9.5,506.0 L11.0,516.0 L16.0,516.0 L20.0,513.0 L22.6,513.2 L24.4,511.2 L26.2,513.8 L28.4,512.1 L30.6,513.0 L32.4,511.4 L34.2,513.7 L36.1,512.6 L37.9,510.0 L39.7,514.2 L42.0,512.7 L43.8,509.3 L45.6,514.4 L48.8,512.8 L52.0,513.5 L53.8,511.3 L55.6,514.3 L57.5,512.3 L59.4,512.6 L61.2,510.4 L63.0,514.2 L65.8,513.1 L67.6,509.3 L69.4,513.6 L72.5,512.1 L75.5,512.6 L77.3,510.8 L79.1,514.0 L81.7,512.6 L84.2,513.1 L86.0,509.9 L87.8,513.4 L100.0,513.0 L105.0,518.0 L108.4,518.2 L110.2,514.9 L112.0,519.6 L115.9,518.0 L119.8,519.1 L121.6,516.8 L123.4,519.4 L128.0,519.0 L133.0,521.0 L135.8,520.1 L138.6,521.2 L140.4,516.8 L142.2,521.9 L146.7,520.6 L151.3,521.2 L153.1,517.4 L154.9,521.9 L157.5,521.7 L160.2,521.4 L162.0,517.8 L163.8,522.0 L165.5,521.2 L167.3,517.2 L169.1,522.5 L180.0,521.0 L183.8,518.6 L185.6,513.8 L187.4,516.6 L195.0,512.0 L197.7,511.6 L199.5,510.3 L201.3,513.2 L203.7,511.7 L205.5,509.1 L207.3,513.3 L209.2,511.9 L211.0,508.6 L212.8,513.3 L217.1,512.7 L221.4,511.8 L223.2,509.0 L225.0,512.5 L230.0,512.0 L240.0,513.0 L242.6,512.7 L244.4,510.7 L246.2,513.4 L248.9,513.2 L251.7,512.8 L253.5,511.5 L255.3,513.6 L257.6,513.1 L259.8,513.5 L261.6,509.1 L263.4,513.8 L266.8,513.4 L270.2,512.6 L272.0,508.4 L273.8,514.2 L278.3,513.6 L282.9,512.9 L284.7,510.1 L286.5,513.2 L289.9,512.1 L293.4,512.6 L295.2,510.8 L297.0,513.2 L299.1,512.1 L301.2,512.5 L303.0,511.0 L304.8,513.2 L307.1,512.1 L309.3,513.4 L311.1,509.4 L312.9,513.2 L316.4,512.8 L318.2,510.2 L320.0,513.2 L324.4,514.0 L328.8,513.0 L330.6,509.8 L332.4,513.1 L336.0,513.0 L338.0,508.0 L340.0,511.6 L342.1,511.1 L344.3,511.9 L346.1,509.5 L347.9,511.6 L352.8,511.6 L357.6,511.1 L359.4,508.1 L361.2,511.5 L364.2,512.4 L367.2,511.8 L369.0,507.5 L370.8,511.8 L373.0,510.7 L375.3,511.7 L377.1,508.0 L378.9,512.5 L381.0,510.8 L383.1,511.7 L384.9,506.4 L386.7,512.6 L390.9,511.9 L395.1,511.5 L396.9,509.0 L398.7,512.0 L400.9,510.3 L403.1,510.7 L404.9,508.7 L406.7,511.6 L410.4,512.1 L414.2,511.1 L416.0,506.4 L417.8,512.6 L422.6,510.8 L427.5,510.8 L429.3,508.8 L431.1,511.3 L434.2,511.2 L436.0,506.4 L437.8,512.3 L440.0,511.0 L450.0,499.0 L454.2,498.2 L458.4,499.2 L460.2,494.3 L462.0,500.2 L466.0,499.0 L469.9,498.7 L471.7,494.7 L473.5,499.5 L477.8,499.9 L482.0,498.9 L483.8,496.1 L485.6,500.4 L489.4,498.3 L493.3,498.6 L495.1,497.0 L496.9,500.4 L500.0,499.0 L502.0,505.0 L504.5,505.3 L506.3,500.1 L508.1,506.0 L510.3,505.1 L512.5,504.6 L514.3,503.5 L516.1,506.5 L519.6,505.1 L523.1,505.4 L524.9,502.0 L526.7,506.3 L531.0,504.4 L535.4,504.8 L537.2,502.5 L539.0,505.4 L540.0,505.0 L543.5,506.6 L545.3,505.5 L547.1,509.7 L555.0,512.0 L557.7,512.2 L560.3,512.4 L562.1,509.0 L563.9,513.4 L566.8,512.1 L569.6,512.0 L571.4,510.4 L573.2,512.7 L575.0,512.0 L577.0,500.0 L579.0,512.0 L580.2,512.4 L582.0,510.0 L583.8,512.9 L587.7,512.5 L591.6,512.4 L593.4,509.4 L595.2,513.6 L600.0,513.0 L602.2,513.2 L604.0,510.8 L605.8,513.7 L609.8,513.5 L613.9,513.8 L615.7,509.6 L617.5,515.2 L620.0,514.0 L623.4,514.0 L626.7,514.0 L628.5,510.1 L630.3,514.7 L640.0,514.0 L645.0,510.0 L649.8,510.5 L654.7,510.6 L656.5,505.4 L658.3,510.6 L661.4,511.2 L664.5,510.7 L666.3,508.4 L668.1,510.6 L670.7,509.6 L673.3,510.3 L675.1,508.8 L676.9,511.6 L681.0,511.4 L685.1,510.4 L686.9,506.8 L688.7,511.8 L691.2,511.2 L693.0,506.0 L694.8,511.2 L700.0,511.0 L702.4,510.9 L704.8,511.4 L706.6,506.5 L708.4,511.1 L710.9,510.9 L713.5,510.7 L715.3,508.6 L717.1,511.3 L720.9,509.8 L724.8,510.7 L726.6,507.6 L728.4,510.7 L730.5,510.9 L732.6,510.6 L734.4,508.8 L736.2,512.0 L740.3,511.4 L744.4,510.0 L746.2,508.0 L748.0,510.4 L752.2,509.9 L756.3,509.9 L758.1,507.3 L759.9,511.6 L764.1,509.7 L768.4,509.8 L770.2,505.4 L772.0,510.9 L777.0,510.0 L779.0,509.9 L780.8,506.7 L782.6,511.5 L784.5,511.6 L786.3,507.7 L788.1,512.9 L790.0,512.0 L800.0,519.0 L801.8,519.3 L803.6,515.9 L805.4,519.4 L808.5,519.7 L811.6,518.6 L813.4,516.9 L815.2,519.6 L818.5,518.3 L820.3,516.6 L822.1,518.8 L825.1,518.5 L826.9,516.0 L828.7,519.7 L830.6,518.6 L832.5,518.2 L834.3,515.8 L836.1,518.5 L839.6,517.9 L841.4,514.3 L843.2,519.2 L846.1,518.3 L847.9,513.5 L849.7,518.4 L854.0,518.1 L858.3,518.2 L860.1,513.7 L861.9,518.7 L870.0,518.0 L880.0,512.0 L885.0,511.9 L890.0,512.7 L891.8,508.5 L893.6,513.5 L896.1,512.3 L898.5,512.3 L900.3,510.9 L902.1,513.0 L905.0,513.0 L910.0,516.0 L912.7,515.6 L914.5,511.6 L916.3,517.3 L919.9,515.6 L923.5,515.7 L925.3,513.5 L927.1,516.7 L929.7,515.9 L931.5,513.6 L933.3,517.4 L938.3,516.1 L943.3,515.7 L945.1,511.1 L946.9,516.5 L949.1,515.0 L951.3,515.9 L953.1,512.8 L954.9,516.8 L957.9,516.0 L959.7,514.5 L961.5,516.4 L963.5,515.9 L965.3,514.4 L967.1,516.0 L969.1,515.5 L971.0,516.1 L972.8,512.6 L974.6,517.1 L978.2,516.4 L981.8,516.4 L983.6,513.1 L985.4,516.5 L990.4,515.3 L995.4,516.2 L997.2,512.2 L999.0,516.1 L1003.4,516.8 L1007.7,516.1 L1009.5,511.9 L1011.3,517.2 L1013.8,516.0 L1015.6,512.7 L1017.4,517.3 L1021.6,516.7 L1025.8,516.1 L1027.6,511.4 L1029.4,517.0 L1033.0,516.0 L1034.5,540.0 L1035.5,572.0 L1036.5,577.0 L1037.5,577.0 L1038.5,572.0 L1039.5,540.0 L1041.0,519.0 L1043.0,519.0 L1045.0,524.8 L1140.0,524.8 L1143.3,523.7 L1145.1,521.9 L1146.9,524.0 L1149.0,523.4 L1150.8,519.3 L1152.6,523.3 L1156.0,522.1 L1159.4,521.1 L1161.2,519.2 L1163.0,521.6 L1165.0,520.0 L1167.9,520.1 L1170.7,520.2 L1172.5,518.3 L1174.3,521.1 L1177.8,519.6 L1179.6,517.6 L1181.4,521.1 L1184.4,520.2 L1186.2,515.1 L1188.0,520.7 L1190.4,520.0 L1192.7,520.2 L1194.5,515.8 L1196.3,520.9 L1199.8,519.2 L1203.3,519.6 L1205.1,517.6 L1206.9,521.1 L1208.8,520.1 L1210.8,519.5 L1212.6,518.3 L1214.4,520.4 L1218.0,520.4 L1221.7,520.2 L1223.5,517.5 L1225.3,520.8 L1229.0,520.0 L1231.7,519.2 L1234.4,520.4 L1236.2,517.8 L1238.0,521.5 L1251.0,520.0 L1252.0,527.7 L1253.4,527.7 L1255.2,523.3 L1257.0,529.2 L1259.6,527.2 L1262.2,527.4 L1264.0,522.9 L1265.8,528.0 L1269.0,527.0 L1272.2,527.7 L1274.0,522.9 L1275.8,527.9 L1280.1,527.7 L1284.4,528.1 L1286.2,523.7 L1288.0,528.0 L1295.0,527.7 L1297.0,515.0 L1299.8,513.6 L1302.6,513.6 L1304.4,510.6 L1306.2,514.3 L1310.0,513.0 L1312.5,512.8 L1314.3,510.3 L1316.1,514.1 L1317.3,513.1 L1319.1,508.3 L1320.9,512.9 L1325.7,513.0 L1330.4,512.9 L1332.2,509.9 L1334.0,513.0 L1336.4,513.3 L1338.8,512.4 L1340.6,509.5 L1342.4,512.8 L1350.0,512.0 L1351.6,511.4 L1353.4,507.1 L1355.2,511.8 L1360.0,510.2 L1364.9,509.9 L1366.7,506.6 L1368.5,510.0 L1370.7,510.3 L1373.0,509.5 L1374.8,504.6 L1376.6,509.6 L1390.0,507.0 L1391.0,525.0 L1402.0,526.0 L1403.0,578.0 L1406.0,578.0 L1407.0,588.0 L1441.0,588.0 L1441.0,588 L0.0,588 Z" fill="#bce2f8"/><path d="M0.0,508.0 L1.0,525.0 L6.0,525.0 L8.0,510.0 L9.5,506.0 L11.0,516.0 L16.0,516.0 L20.0,513.0 L22.6,513.2 L24.4,511.2 L26.2,513.8 L28.4,512.1 L30.6,513.0 L32.4,511.4 L34.2,513.7 L36.1,512.6 L37.9,510.0 L39.7,514.2 L42.0,512.7 L43.8,509.3 L45.6,514.4 L48.8,512.8 L52.0,513.5 L53.8,511.3 L55.6,514.3 L57.5,512.3 L59.4,512.6 L61.2,510.4 L63.0,514.2 L65.8,513.1 L67.6,509.3 L69.4,513.6 L72.5,512.1 L75.5,512.6 L77.3,510.8 L79.1,514.0 L81.7,512.6 L84.2,513.1 L86.0,509.9 L87.8,513.4 L100.0,513.0 L105.0,518.0 L108.4,518.2 L110.2,514.9 L112.0,519.6 L115.9,518.0 L119.8,519.1 L121.6,516.8 L123.4,519.4 L128.0,519.0 L133.0,521.0 L135.8,520.1 L138.6,521.2 L140.4,516.8 L142.2,521.9 L146.7,520.6 L151.3,521.2 L153.1,517.4 L154.9,521.9 L157.5,521.7 L160.2,521.4 L162.0,517.8 L163.8,522.0 L165.5,521.2 L167.3,517.2 L169.1,522.5 L180.0,521.0 L183.8,518.6 L185.6,513.8 L187.4,516.6 L195.0,512.0 L197.7,511.6 L199.5,510.3 L201.3,513.2 L203.7,511.7 L205.5,509.1 L207.3,513.3 L209.2,511.9 L211.0,508.6 L212.8,513.3 L217.1,512.7 L221.4,511.8 L223.2,509.0 L225.0,512.5 L230.0,512.0 L240.0,513.0 L242.6,512.7 L244.4,510.7 L246.2,513.4 L248.9,513.2 L251.7,512.8 L253.5,511.5 L255.3,513.6 L257.6,513.1 L259.8,513.5 L261.6,509.1 L263.4,513.8 L266.8,513.4 L270.2,512.6 L272.0,508.4 L273.8,514.2 L278.3,513.6 L282.9,512.9 L284.7,510.1 L286.5,513.2 L289.9,512.1 L293.4,512.6 L295.2,510.8 L297.0,513.2 L299.1,512.1 L301.2,512.5 L303.0,511.0 L304.8,513.2 L307.1,512.1 L309.3,513.4 L311.1,509.4 L312.9,513.2 L316.4,512.8 L318.2,510.2 L320.0,513.2 L324.4,514.0 L328.8,513.0 L330.6,509.8 L332.4,513.1 L336.0,513.0 L338.0,508.0 L340.0,511.6 L342.1,511.1 L344.3,511.9 L346.1,509.5 L347.9,511.6 L352.8,511.6 L357.6,511.1 L359.4,508.1 L361.2,511.5 L364.2,512.4 L367.2,511.8 L369.0,507.5 L370.8,511.8 L373.0,510.7 L375.3,511.7 L377.1,508.0 L378.9,512.5 L381.0,510.8 L383.1,511.7 L384.9,506.4 L386.7,512.6 L390.9,511.9 L395.1,511.5 L396.9,509.0 L398.7,512.0 L400.9,510.3 L403.1,510.7 L404.9,508.7 L406.7,511.6 L410.4,512.1 L414.2,511.1 L416.0,506.4 L417.8,512.6 L422.6,510.8 L427.5,510.8 L429.3,508.8 L431.1,511.3 L434.2,511.2 L436.0,506.4 L437.8,512.3 L440.0,511.0 L450.0,499.0 L454.2,498.2 L458.4,499.2 L460.2,494.3 L462.0,500.2 L466.0,499.0 L469.9,498.7 L471.7,494.7 L473.5,499.5 L477.8,499.9 L482.0,498.9 L483.8,496.1 L485.6,500.4 L489.4,498.3 L493.3,498.6 L495.1,497.0 L496.9,500.4 L500.0,499.0 L502.0,505.0 L504.5,505.3 L506.3,500.1 L508.1,506.0 L510.3,505.1 L512.5,504.6 L514.3,503.5 L516.1,506.5 L519.6,505.1 L523.1,505.4 L524.9,502.0 L526.7,506.3 L531.0,504.4 L535.4,504.8 L537.2,502.5 L539.0,505.4 L540.0,505.0 L543.5,506.6 L545.3,505.5 L547.1,509.7 L555.0,512.0 L557.7,512.2 L560.3,512.4 L562.1,509.0 L563.9,513.4 L566.8,512.1 L569.6,512.0 L571.4,510.4 L573.2,512.7 L575.0,512.0 L577.0,500.0 L579.0,512.0 L580.2,512.4 L582.0,510.0 L583.8,512.9 L587.7,512.5 L591.6,512.4 L593.4,509.4 L595.2,513.6 L600.0,513.0 L602.2,513.2 L604.0,510.8 L605.8,513.7 L609.8,513.5 L613.9,513.8 L615.7,509.6 L617.5,515.2 L620.0,514.0 L623.4,514.0 L626.7,514.0 L628.5,510.1 L630.3,514.7 L640.0,514.0 L645.0,510.0 L649.8,510.5 L654.7,510.6 L656.5,505.4 L658.3,510.6 L661.4,511.2 L664.5,510.7 L666.3,508.4 L668.1,510.6 L670.7,509.6 L673.3,510.3 L675.1,508.8 L676.9,511.6 L681.0,511.4 L685.1,510.4 L686.9,506.8 L688.7,511.8 L691.2,511.2 L693.0,506.0 L694.8,511.2 L700.0,511.0 L702.4,510.9 L704.8,511.4 L706.6,506.5 L708.4,511.1 L710.9,510.9 L713.5,510.7 L715.3,508.6 L717.1,511.3 L720.9,509.8 L724.8,510.7 L726.6,507.6 L728.4,510.7 L730.5,510.9 L732.6,510.6 L734.4,508.8 L736.2,512.0 L740.3,511.4 L744.4,510.0 L746.2,508.0 L748.0,510.4 L752.2,509.9 L756.3,509.9 L758.1,507.3 L759.9,511.6 L764.1,509.7 L768.4,509.8 L770.2,505.4 L772.0,510.9 L777.0,510.0 L779.0,509.9 L780.8,506.7 L782.6,511.5 L784.5,511.6 L786.3,507.7 L788.1,512.9 L790.0,512.0 L800.0,519.0 L801.8,519.3 L803.6,515.9 L805.4,519.4 L808.5,519.7 L811.6,518.6 L813.4,516.9 L815.2,519.6 L818.5,518.3 L820.3,516.6 L822.1,518.8 L825.1,518.5 L826.9,516.0 L828.7,519.7 L830.6,518.6 L832.5,518.2 L834.3,515.8 L836.1,518.5 L839.6,517.9 L841.4,514.3 L843.2,519.2 L846.1,518.3 L847.9,513.5 L849.7,518.4 L854.0,518.1 L858.3,518.2 L860.1,513.7 L861.9,518.7 L870.0,518.0 L880.0,512.0 L885.0,511.9 L890.0,512.7 L891.8,508.5 L893.6,513.5 L896.1,512.3 L898.5,512.3 L900.3,510.9 L902.1,513.0 L905.0,513.0 L910.0,516.0 L912.7,515.6 L914.5,511.6 L916.3,517.3 L919.9,515.6 L923.5,515.7 L925.3,513.5 L927.1,516.7 L929.7,515.9 L931.5,513.6 L933.3,517.4 L938.3,516.1 L943.3,515.7 L945.1,511.1 L946.9,516.5 L949.1,515.0 L951.3,515.9 L953.1,512.8 L954.9,516.8 L957.9,516.0 L959.7,514.5 L961.5,516.4 L963.5,515.9 L965.3,514.4 L967.1,516.0 L969.1,515.5 L971.0,516.1 L972.8,512.6 L974.6,517.1 L978.2,516.4 L981.8,516.4 L983.6,513.1 L985.4,516.5 L990.4,515.3 L995.4,516.2 L997.2,512.2 L999.0,516.1 L1003.4,516.8 L1007.7,516.1 L1009.5,511.9 L1011.3,517.2 L1013.8,516.0 L1015.6,512.7 L1017.4,517.3 L1021.6,516.7 L1025.8,516.1 L1027.6,511.4 L1029.4,517.0 L1033.0,516.0 L1034.5,540.0 L1035.5,572.0 L1036.5,577.0 L1037.5,577.0 L1038.5,572.0 L1039.5,540.0 L1041.0,519.0 L1043.0,519.0 L1045.0,524.8 L1140.0,524.8 L1143.3,523.7 L1145.1,521.9 L1146.9,524.0 L1149.0,523.4 L1150.8,519.3 L1152.6,523.3 L1156.0,522.1 L1159.4,521.1 L1161.2,519.2 L1163.0,521.6 L1165.0,520.0 L1167.9,520.1 L1170.7,520.2 L1172.5,518.3 L1174.3,521.1 L1177.8,519.6 L1179.6,517.6 L1181.4,521.1 L1184.4,520.2 L1186.2,515.1 L1188.0,520.7 L1190.4,520.0 L1192.7,520.2 L1194.5,515.8 L1196.3,520.9 L1199.8,519.2 L1203.3,519.6 L1205.1,517.6 L1206.9,521.1 L1208.8,520.1 L1210.8,519.5 L1212.6,518.3 L1214.4,520.4 L1218.0,520.4 L1221.7,520.2 L1223.5,517.5 L1225.3,520.8 L1229.0,520.0 L1231.7,519.2 L1234.4,520.4 L1236.2,517.8 L1238.0,521.5 L1251.0,520.0 L1252.0,527.7 L1253.4,527.7 L1255.2,523.3 L1257.0,529.2 L1259.6,527.2 L1262.2,527.4 L1264.0,522.9 L1265.8,528.0 L1269.0,527.0 L1272.2,527.7 L1274.0,522.9 L1275.8,527.9 L1280.1,527.7 L1284.4,528.1 L1286.2,523.7 L1288.0,528.0 L1295.0,527.7 L1297.0,515.0 L1299.8,513.6 L1302.6,513.6 L1304.4,510.6 L1306.2,514.3 L1310.0,513.0 L1312.5,512.8 L1314.3,510.3 L1316.1,514.1 L1317.3,513.1 L1319.1,508.3 L1320.9,512.9 L1325.7,513.0 L1330.4,512.9 L1332.2,509.9 L1334.0,513.0 L1336.4,513.3 L1338.8,512.4 L1340.6,509.5 L1342.4,512.8 L1350.0,512.0 L1351.6,511.4 L1353.4,507.1 L1355.2,511.8 L1360.0,510.2 L1364.9,509.9 L1366.7,506.6 L1368.5,510.0 L1370.7,510.3 L1373.0,509.5 L1374.8,504.6 L1376.6,509.6 L1390.0,507.0 L1391.0,525.0 L1402.0,526.0 L1403.0,578.0 L1406.0,578.0 L1407.0,588.0 L1441.0,588.0" fill="none" stroke="#3f9ee0" stroke-width="1.1" stroke-linejoin="round"/><line x1="0" y1="588" x2="1441" y2="588" stroke="#3f9ee0" stroke-width="1.6"/></g>
<g clip-path="url(#cun)"><path d="M0.0,671.0 L3.0,721.0 L5.0,667.0 L8.0,669.0 L10.8,670.3 L13.6,668.2 L15.8,659.1 L18.0,671.3 L21.6,670.5 L25.1,669.4 L27.3,666.6 L29.5,673.9 L32.2,670.2 L34.4,664.0 L36.6,671.7 L40.1,673.1 L43.6,670.3 L45.8,661.5 L48.0,672.4 L50.8,670.8 L53.7,670.7 L55.9,667.0 L58.1,672.6 L62.1,671.9 L66.2,671.5 L68.4,660.2 L70.6,676.4 L73.1,670.7 L75.6,671.9 L77.8,668.9 L80.0,674.3 L82.4,672.4 L84.6,667.6 L86.8,675.6 L100.0,674.0 L103.5,673.6 L107.0,673.8 L109.2,665.8 L111.4,675.6 L115.6,673.0 L117.8,668.3 L120.0,678.0 L122.7,674.2 L124.9,664.9 L127.1,677.6 L130.4,673.6 L132.6,668.7 L134.8,675.8 L137.3,676.5 L139.7,675.1 L141.9,662.6 L144.1,674.4 L146.2,674.8 L148.4,662.4 L150.6,676.2 L153.5,671.9 L156.5,674.1 L158.7,662.1 L160.9,677.7 L164.8,676.8 L168.7,673.8 L170.9,670.4 L173.1,675.1 L175.8,675.4 L178.5,675.6 L180.7,664.3 L182.9,677.1 L186.5,674.4 L190.1,674.7 L192.3,671.2 L194.5,677.8 L197.9,675.7 L200.1,665.2 L202.3,675.9 L205.0,674.1 L207.2,665.4 L209.4,677.5 L212.0,673.7 L214.2,666.5 L216.4,677.1 L218.6,673.4 L220.9,675.1 L223.1,671.7 L225.3,676.0 L227.8,677.1 L230.3,675.2 L232.5,663.0 L234.7,676.8 L238.2,674.3 L240.4,662.3 L242.6,677.8 L246.5,673.8 L248.7,667.0 L250.9,677.7 L253.3,673.8 L255.6,675.5 L257.8,662.8 L260.0,676.0 L262.1,674.7 L264.3,667.9 L266.5,677.8 L269.7,675.9 L271.9,664.8 L274.1,677.2 L277.3,676.4 L279.5,669.1 L281.7,678.5 L285.1,674.5 L287.3,664.6 L289.5,676.4 L293.8,675.3 L298.0,674.5 L300.2,670.1 L302.4,677.0 L305.6,677.6 L308.8,674.5 L311.0,668.5 L313.2,676.3 L317.6,673.7 L321.9,674.4 L324.1,671.9 L326.3,677.1 L330.3,677.5 L334.4,676.1 L336.6,662.6 L338.8,679.3 L342.9,674.8 L345.1,663.3 L347.3,678.6 L349.3,676.1 L351.5,668.9 L353.7,677.2 L357.8,674.9 L360.0,672.7 L362.2,676.9 L364.3,678.0 L366.5,674.8 L368.7,663.1 L370.9,676.6 L373.0,677.4 L375.2,676.6 L377.4,668.5 L379.6,676.1 L382.1,675.2 L384.7,676.9 L386.9,671.0 L389.1,677.4 L400.0,676.0 L402.0,675.7 L404.2,664.8 L406.4,678.9 L408.5,674.7 L410.7,672.2 L412.9,679.4 L416.5,676.3 L418.7,663.6 L420.9,676.9 L424.6,676.7 L426.8,666.3 L429.0,676.5 L432.4,674.4 L435.8,674.7 L438.0,672.2 L440.2,678.2 L444.3,675.8 L448.4,676.1 L450.6,671.7 L452.8,675.9 L455.4,677.2 L458.0,676.0 L460.2,667.9 L462.4,675.8 L464.8,674.7 L467.2,675.7 L469.4,669.8 L471.6,677.8 L475.1,676.1 L478.5,675.1 L480.7,665.3 L482.9,675.7 L487.0,673.9 L489.2,663.4 L491.4,674.5 L494.6,674.7 L496.8,668.6 L499.0,674.3 L500.0,674.0 L510.0,668.0 L514.1,669.3 L516.3,656.2 L518.5,672.1 L522.1,667.1 L524.3,664.2 L526.5,670.2 L529.9,668.0 L533.3,667.6 L535.5,661.2 L537.7,670.8 L541.0,669.6 L544.2,669.3 L546.4,658.8 L548.6,669.0 L552.5,667.5 L556.3,668.7 L558.5,661.9 L560.7,671.6 L563.9,668.0 L566.1,663.2 L568.3,669.3 L572.3,669.2 L576.3,668.4 L578.5,661.9 L580.7,672.9 L590.0,669.0 L593.4,670.5 L595.6,660.6 L597.8,674.5 L600.3,671.0 L602.5,660.3 L604.7,675.3 L608.8,670.5 L612.9,673.1 L615.1,669.8 L617.3,675.2 L620.0,675.0 L622.9,677.1 L625.9,674.6 L628.1,663.3 L630.3,676.7 L633.9,675.6 L636.1,662.4 L638.3,675.3 L641.3,675.5 L644.3,674.1 L646.5,668.1 L648.7,675.4 L651.9,674.2 L654.1,665.8 L656.3,677.4 L659.5,673.5 L661.7,668.5 L663.9,677.4 L667.0,674.2 L669.2,669.7 L671.4,677.9 L674.2,672.5 L677.1,673.6 L679.3,667.7 L681.5,676.8 L684.6,672.5 L687.7,673.7 L689.9,664.6 L692.1,676.2 L695.9,674.0 L698.1,662.0 L700.3,675.7 L703.2,673.8 L706.1,674.2 L708.3,662.8 L710.5,678.4 L712.7,672.9 L714.8,675.0 L717.0,669.3 L719.2,674.4 L723.3,674.0 L727.3,675.1 L729.5,667.2 L731.7,677.8 L734.3,672.6 L736.8,673.0 L739.0,665.7 L741.2,676.8 L745.3,672.1 L749.3,674.5 L751.5,667.5 L753.7,676.2 L756.6,673.6 L758.8,665.9 L761.0,677.8 L763.5,674.1 L765.7,663.0 L767.9,677.9 L771.1,673.1 L773.3,661.6 L775.5,677.9 L777.0,674.0 L779.2,675.1 L781.4,667.1 L783.6,677.6 L786.6,675.7 L789.7,673.2 L791.9,663.2 L794.1,675.0 L796.4,675.8 L798.7,674.9 L800.9,669.3 L803.1,675.0 L805.4,674.2 L807.7,673.8 L809.9,669.9 L812.1,675.1 L815.6,676.1 L819.0,673.0 L821.2,665.5 L823.4,677.2 L825.5,675.0 L827.7,670.0 L829.9,676.6 L832.7,674.9 L835.5,673.7 L837.7,667.0 L839.9,676.6 L842.3,675.0 L844.7,674.1 L846.9,666.9 L849.1,674.4 L852.2,674.2 L855.2,673.6 L857.4,663.7 L859.6,677.4 L862.2,672.7 L864.7,674.3 L866.9,670.3 L869.1,674.9 L871.5,672.3 L873.9,674.2 L876.1,666.3 L878.3,674.6 L881.4,672.3 L884.5,675.0 L886.7,663.7 L888.9,676.5 L891.1,674.5 L893.3,667.7 L895.5,678.3 L898.3,675.4 L900.5,661.5 L902.7,677.4 L906.4,673.0 L910.2,675.7 L912.4,666.6 L914.6,678.4 L918.7,672.9 L922.8,675.3 L925.0,662.3 L927.2,674.8 L929.3,675.9 L931.4,673.8 L933.6,662.6 L935.8,675.7 L939.6,672.9 L943.3,674.7 L945.5,662.5 L947.7,675.5 L951.4,674.7 L953.6,668.5 L955.8,674.8 L958.9,673.9 L961.1,662.4 L963.3,677.4 L967.3,673.1 L971.3,675.5 L973.5,670.6 L975.7,676.9 L978.9,674.1 L982.0,675.7 L984.2,666.3 L986.4,677.1 L990.4,672.9 L994.4,676.1 L996.6,665.6 L998.8,676.4 L1002.4,673.7 L1006.1,676.1 L1008.3,666.1 L1010.5,676.4 L1014.1,674.6 L1017.7,674.1 L1019.9,664.5 L1022.1,675.2 L1033.0,675.0 L1034.5,690.0 L1035.5,722.0 L1036.5,731.0 L1037.5,722.0 L1038.5,690.0 L1039.5,670.0 L1043.1,670.5 L1045.3,657.3 L1047.5,672.6 L1050.7,669.4 L1053.9,669.2 L1056.1,667.2 L1058.3,671.2 L1061.4,670.4 L1064.4,670.8 L1066.6,658.9 L1068.8,671.5 L1072.2,671.4 L1074.4,667.9 L1076.6,671.2 L1078.8,669.3 L1080.9,671.0 L1083.1,666.1 L1085.3,673.8 L1088.3,670.1 L1091.2,671.9 L1093.4,664.0 L1095.6,672.3 L1099.8,670.6 L1104.0,671.2 L1106.2,668.2 L1108.4,674.7 L1112.3,673.7 L1116.3,672.2 L1118.5,666.9 L1120.7,672.6 L1123.8,673.0 L1127.0,672.4 L1129.2,663.4 L1131.4,674.7 L1135.6,674.2 L1139.8,672.5 L1142.0,661.2 L1144.2,673.5 L1146.9,672.9 L1149.7,672.8 L1151.9,670.0 L1154.1,676.7 L1156.0,673.8 L1158.2,661.3 L1160.4,674.4 L1163.6,674.2 L1165.8,665.9 L1168.0,676.6 L1171.7,672.6 L1175.5,673.8 L1177.7,668.4 L1179.9,674.6 L1183.9,676.0 L1187.9,675.2 L1190.1,671.7 L1192.3,678.2 L1195.8,674.8 L1199.3,675.7 L1201.5,667.6 L1203.7,676.1 L1206.2,674.6 L1208.4,672.0 L1210.6,676.8 L1214.2,676.5 L1217.7,676.5 L1219.9,665.6 L1222.1,676.8 L1229.0,676.0 L1231.4,677.4 L1233.9,676.1 L1236.1,670.3 L1238.3,678.6 L1242.5,674.6 L1246.8,677.0 L1249.0,672.8 L1251.2,677.0 L1254.7,676.6 L1256.9,663.6 L1259.1,679.0 L1263.1,677.0 L1265.3,669.7 L1267.5,677.0 L1271.6,676.7 L1275.7,676.5 L1277.9,666.3 L1280.1,679.9 L1282.6,677.7 L1285.2,676.5 L1287.4,664.4 L1289.6,677.7 L1293.0,676.4 L1296.5,675.5 L1298.7,670.9 L1300.9,678.5 L1303.2,677.0 L1305.4,671.6 L1307.6,676.1 L1310.2,677.1 L1312.4,669.6 L1314.6,676.6 L1316.6,674.9 L1318.8,666.1 L1321.0,678.5 L1324.3,677.2 L1327.6,674.9 L1329.8,667.1 L1332.0,677.5 L1335.8,677.6 L1339.6,677.0 L1341.8,672.3 L1344.0,679.5 L1348.1,678.2 L1352.2,675.0 L1354.4,670.9 L1356.6,676.4 L1358.6,676.9 L1360.8,664.9 L1363.0,678.5 L1366.8,676.7 L1370.6,675.5 L1372.8,672.0 L1375.0,676.4 L1378.5,674.5 L1382.1,675.5 L1384.3,668.8 L1386.5,676.1 L1390.0,676.0 L1391.5,720.0 L1394.0,721.0 L1396.0,709.0 L1398.0,721.0 L1400.0,709.0 L1402.0,720.0 L1404.0,740.0 L1425.0,740.0 L1427.0,743.0 L1441.0,743.0 L1441.0,745.7 L0.0,745.7 Z" fill="#eef4f6"/><path d="M0.0,671.0 L3.0,721.0 L5.0,667.0 L8.0,669.0 L10.8,670.3 L13.6,668.2 L15.8,659.1 L18.0,671.3 L21.6,670.5 L25.1,669.4 L27.3,666.6 L29.5,673.9 L32.2,670.2 L34.4,664.0 L36.6,671.7 L40.1,673.1 L43.6,670.3 L45.8,661.5 L48.0,672.4 L50.8,670.8 L53.7,670.7 L55.9,667.0 L58.1,672.6 L62.1,671.9 L66.2,671.5 L68.4,660.2 L70.6,676.4 L73.1,670.7 L75.6,671.9 L77.8,668.9 L80.0,674.3 L82.4,672.4 L84.6,667.6 L86.8,675.6 L100.0,674.0 L103.5,673.6 L107.0,673.8 L109.2,665.8 L111.4,675.6 L115.6,673.0 L117.8,668.3 L120.0,678.0 L122.7,674.2 L124.9,664.9 L127.1,677.6 L130.4,673.6 L132.6,668.7 L134.8,675.8 L137.3,676.5 L139.7,675.1 L141.9,662.6 L144.1,674.4 L146.2,674.8 L148.4,662.4 L150.6,676.2 L153.5,671.9 L156.5,674.1 L158.7,662.1 L160.9,677.7 L164.8,676.8 L168.7,673.8 L170.9,670.4 L173.1,675.1 L175.8,675.4 L178.5,675.6 L180.7,664.3 L182.9,677.1 L186.5,674.4 L190.1,674.7 L192.3,671.2 L194.5,677.8 L197.9,675.7 L200.1,665.2 L202.3,675.9 L205.0,674.1 L207.2,665.4 L209.4,677.5 L212.0,673.7 L214.2,666.5 L216.4,677.1 L218.6,673.4 L220.9,675.1 L223.1,671.7 L225.3,676.0 L227.8,677.1 L230.3,675.2 L232.5,663.0 L234.7,676.8 L238.2,674.3 L240.4,662.3 L242.6,677.8 L246.5,673.8 L248.7,667.0 L250.9,677.7 L253.3,673.8 L255.6,675.5 L257.8,662.8 L260.0,676.0 L262.1,674.7 L264.3,667.9 L266.5,677.8 L269.7,675.9 L271.9,664.8 L274.1,677.2 L277.3,676.4 L279.5,669.1 L281.7,678.5 L285.1,674.5 L287.3,664.6 L289.5,676.4 L293.8,675.3 L298.0,674.5 L300.2,670.1 L302.4,677.0 L305.6,677.6 L308.8,674.5 L311.0,668.5 L313.2,676.3 L317.6,673.7 L321.9,674.4 L324.1,671.9 L326.3,677.1 L330.3,677.5 L334.4,676.1 L336.6,662.6 L338.8,679.3 L342.9,674.8 L345.1,663.3 L347.3,678.6 L349.3,676.1 L351.5,668.9 L353.7,677.2 L357.8,674.9 L360.0,672.7 L362.2,676.9 L364.3,678.0 L366.5,674.8 L368.7,663.1 L370.9,676.6 L373.0,677.4 L375.2,676.6 L377.4,668.5 L379.6,676.1 L382.1,675.2 L384.7,676.9 L386.9,671.0 L389.1,677.4 L400.0,676.0 L402.0,675.7 L404.2,664.8 L406.4,678.9 L408.5,674.7 L410.7,672.2 L412.9,679.4 L416.5,676.3 L418.7,663.6 L420.9,676.9 L424.6,676.7 L426.8,666.3 L429.0,676.5 L432.4,674.4 L435.8,674.7 L438.0,672.2 L440.2,678.2 L444.3,675.8 L448.4,676.1 L450.6,671.7 L452.8,675.9 L455.4,677.2 L458.0,676.0 L460.2,667.9 L462.4,675.8 L464.8,674.7 L467.2,675.7 L469.4,669.8 L471.6,677.8 L475.1,676.1 L478.5,675.1 L480.7,665.3 L482.9,675.7 L487.0,673.9 L489.2,663.4 L491.4,674.5 L494.6,674.7 L496.8,668.6 L499.0,674.3 L500.0,674.0 L510.0,668.0 L514.1,669.3 L516.3,656.2 L518.5,672.1 L522.1,667.1 L524.3,664.2 L526.5,670.2 L529.9,668.0 L533.3,667.6 L535.5,661.2 L537.7,670.8 L541.0,669.6 L544.2,669.3 L546.4,658.8 L548.6,669.0 L552.5,667.5 L556.3,668.7 L558.5,661.9 L560.7,671.6 L563.9,668.0 L566.1,663.2 L568.3,669.3 L572.3,669.2 L576.3,668.4 L578.5,661.9 L580.7,672.9 L590.0,669.0 L593.4,670.5 L595.6,660.6 L597.8,674.5 L600.3,671.0 L602.5,660.3 L604.7,675.3 L608.8,670.5 L612.9,673.1 L615.1,669.8 L617.3,675.2 L620.0,675.0 L622.9,677.1 L625.9,674.6 L628.1,663.3 L630.3,676.7 L633.9,675.6 L636.1,662.4 L638.3,675.3 L641.3,675.5 L644.3,674.1 L646.5,668.1 L648.7,675.4 L651.9,674.2 L654.1,665.8 L656.3,677.4 L659.5,673.5 L661.7,668.5 L663.9,677.4 L667.0,674.2 L669.2,669.7 L671.4,677.9 L674.2,672.5 L677.1,673.6 L679.3,667.7 L681.5,676.8 L684.6,672.5 L687.7,673.7 L689.9,664.6 L692.1,676.2 L695.9,674.0 L698.1,662.0 L700.3,675.7 L703.2,673.8 L706.1,674.2 L708.3,662.8 L710.5,678.4 L712.7,672.9 L714.8,675.0 L717.0,669.3 L719.2,674.4 L723.3,674.0 L727.3,675.1 L729.5,667.2 L731.7,677.8 L734.3,672.6 L736.8,673.0 L739.0,665.7 L741.2,676.8 L745.3,672.1 L749.3,674.5 L751.5,667.5 L753.7,676.2 L756.6,673.6 L758.8,665.9 L761.0,677.8 L763.5,674.1 L765.7,663.0 L767.9,677.9 L771.1,673.1 L773.3,661.6 L775.5,677.9 L777.0,674.0 L779.2,675.1 L781.4,667.1 L783.6,677.6 L786.6,675.7 L789.7,673.2 L791.9,663.2 L794.1,675.0 L796.4,675.8 L798.7,674.9 L800.9,669.3 L803.1,675.0 L805.4,674.2 L807.7,673.8 L809.9,669.9 L812.1,675.1 L815.6,676.1 L819.0,673.0 L821.2,665.5 L823.4,677.2 L825.5,675.0 L827.7,670.0 L829.9,676.6 L832.7,674.9 L835.5,673.7 L837.7,667.0 L839.9,676.6 L842.3,675.0 L844.7,674.1 L846.9,666.9 L849.1,674.4 L852.2,674.2 L855.2,673.6 L857.4,663.7 L859.6,677.4 L862.2,672.7 L864.7,674.3 L866.9,670.3 L869.1,674.9 L871.5,672.3 L873.9,674.2 L876.1,666.3 L878.3,674.6 L881.4,672.3 L884.5,675.0 L886.7,663.7 L888.9,676.5 L891.1,674.5 L893.3,667.7 L895.5,678.3 L898.3,675.4 L900.5,661.5 L902.7,677.4 L906.4,673.0 L910.2,675.7 L912.4,666.6 L914.6,678.4 L918.7,672.9 L922.8,675.3 L925.0,662.3 L927.2,674.8 L929.3,675.9 L931.4,673.8 L933.6,662.6 L935.8,675.7 L939.6,672.9 L943.3,674.7 L945.5,662.5 L947.7,675.5 L951.4,674.7 L953.6,668.5 L955.8,674.8 L958.9,673.9 L961.1,662.4 L963.3,677.4 L967.3,673.1 L971.3,675.5 L973.5,670.6 L975.7,676.9 L978.9,674.1 L982.0,675.7 L984.2,666.3 L986.4,677.1 L990.4,672.9 L994.4,676.1 L996.6,665.6 L998.8,676.4 L1002.4,673.7 L1006.1,676.1 L1008.3,666.1 L1010.5,676.4 L1014.1,674.6 L1017.7,674.1 L1019.9,664.5 L1022.1,675.2 L1033.0,675.0 L1034.5,690.0 L1035.5,722.0 L1036.5,731.0 L1037.5,722.0 L1038.5,690.0 L1039.5,670.0 L1043.1,670.5 L1045.3,657.3 L1047.5,672.6 L1050.7,669.4 L1053.9,669.2 L1056.1,667.2 L1058.3,671.2 L1061.4,670.4 L1064.4,670.8 L1066.6,658.9 L1068.8,671.5 L1072.2,671.4 L1074.4,667.9 L1076.6,671.2 L1078.8,669.3 L1080.9,671.0 L1083.1,666.1 L1085.3,673.8 L1088.3,670.1 L1091.2,671.9 L1093.4,664.0 L1095.6,672.3 L1099.8,670.6 L1104.0,671.2 L1106.2,668.2 L1108.4,674.7 L1112.3,673.7 L1116.3,672.2 L1118.5,666.9 L1120.7,672.6 L1123.8,673.0 L1127.0,672.4 L1129.2,663.4 L1131.4,674.7 L1135.6,674.2 L1139.8,672.5 L1142.0,661.2 L1144.2,673.5 L1146.9,672.9 L1149.7,672.8 L1151.9,670.0 L1154.1,676.7 L1156.0,673.8 L1158.2,661.3 L1160.4,674.4 L1163.6,674.2 L1165.8,665.9 L1168.0,676.6 L1171.7,672.6 L1175.5,673.8 L1177.7,668.4 L1179.9,674.6 L1183.9,676.0 L1187.9,675.2 L1190.1,671.7 L1192.3,678.2 L1195.8,674.8 L1199.3,675.7 L1201.5,667.6 L1203.7,676.1 L1206.2,674.6 L1208.4,672.0 L1210.6,676.8 L1214.2,676.5 L1217.7,676.5 L1219.9,665.6 L1222.1,676.8 L1229.0,676.0 L1231.4,677.4 L1233.9,676.1 L1236.1,670.3 L1238.3,678.6 L1242.5,674.6 L1246.8,677.0 L1249.0,672.8 L1251.2,677.0 L1254.7,676.6 L1256.9,663.6 L1259.1,679.0 L1263.1,677.0 L1265.3,669.7 L1267.5,677.0 L1271.6,676.7 L1275.7,676.5 L1277.9,666.3 L1280.1,679.9 L1282.6,677.7 L1285.2,676.5 L1287.4,664.4 L1289.6,677.7 L1293.0,676.4 L1296.5,675.5 L1298.7,670.9 L1300.9,678.5 L1303.2,677.0 L1305.4,671.6 L1307.6,676.1 L1310.2,677.1 L1312.4,669.6 L1314.6,676.6 L1316.6,674.9 L1318.8,666.1 L1321.0,678.5 L1324.3,677.2 L1327.6,674.9 L1329.8,667.1 L1332.0,677.5 L1335.8,677.6 L1339.6,677.0 L1341.8,672.3 L1344.0,679.5 L1348.1,678.2 L1352.2,675.0 L1354.4,670.9 L1356.6,676.4 L1358.6,676.9 L1360.8,664.9 L1363.0,678.5 L1366.8,676.7 L1370.6,675.5 L1372.8,672.0 L1375.0,676.4 L1378.5,674.5 L1382.1,675.5 L1384.3,668.8 L1386.5,676.1 L1390.0,676.0 L1391.5,720.0 L1394.0,721.0 L1396.0,709.0 L1398.0,721.0 L1400.0,709.0 L1402.0,720.0 L1404.0,740.0 L1425.0,740.0 L1427.0,743.0 L1441.0,743.0" fill="none" stroke="#a3d2cf" stroke-width="1" stroke-linejoin="round"/><line x1="0" y1="745.7" x2="1441" y2="745.7" stroke="#c9e6e6" stroke-width="1.5"/></g>
<g clip-path="url(#csel)"><path d="M0.0,671.0 L3.0,721.0 L5.0,667.0 L8.0,669.0 L10.8,670.3 L13.6,668.2 L15.8,659.1 L18.0,671.3 L21.6,670.5 L25.1,669.4 L27.3,666.6 L29.5,673.9 L32.2,670.2 L34.4,664.0 L36.6,671.7 L40.1,673.1 L43.6,670.3 L45.8,661.5 L48.0,672.4 L50.8,670.8 L53.7,670.7 L55.9,667.0 L58.1,672.6 L62.1,671.9 L66.2,671.5 L68.4,660.2 L70.6,676.4 L73.1,670.7 L75.6,671.9 L77.8,668.9 L80.0,674.3 L82.4,672.4 L84.6,667.6 L86.8,675.6 L100.0,674.0 L103.5,673.6 L107.0,673.8 L109.2,665.8 L111.4,675.6 L115.6,673.0 L117.8,668.3 L120.0,678.0 L122.7,674.2 L124.9,664.9 L127.1,677.6 L130.4,673.6 L132.6,668.7 L134.8,675.8 L137.3,676.5 L139.7,675.1 L141.9,662.6 L144.1,674.4 L146.2,674.8 L148.4,662.4 L150.6,676.2 L153.5,671.9 L156.5,674.1 L158.7,662.1 L160.9,677.7 L164.8,676.8 L168.7,673.8 L170.9,670.4 L173.1,675.1 L175.8,675.4 L178.5,675.6 L180.7,664.3 L182.9,677.1 L186.5,674.4 L190.1,674.7 L192.3,671.2 L194.5,677.8 L197.9,675.7 L200.1,665.2 L202.3,675.9 L205.0,674.1 L207.2,665.4 L209.4,677.5 L212.0,673.7 L214.2,666.5 L216.4,677.1 L218.6,673.4 L220.9,675.1 L223.1,671.7 L225.3,676.0 L227.8,677.1 L230.3,675.2 L232.5,663.0 L234.7,676.8 L238.2,674.3 L240.4,662.3 L242.6,677.8 L246.5,673.8 L248.7,667.0 L250.9,677.7 L253.3,673.8 L255.6,675.5 L257.8,662.8 L260.0,676.0 L262.1,674.7 L264.3,667.9 L266.5,677.8 L269.7,675.9 L271.9,664.8 L274.1,677.2 L277.3,676.4 L279.5,669.1 L281.7,678.5 L285.1,674.5 L287.3,664.6 L289.5,676.4 L293.8,675.3 L298.0,674.5 L300.2,670.1 L302.4,677.0 L305.6,677.6 L308.8,674.5 L311.0,668.5 L313.2,676.3 L317.6,673.7 L321.9,674.4 L324.1,671.9 L326.3,677.1 L330.3,677.5 L334.4,676.1 L336.6,662.6 L338.8,679.3 L342.9,674.8 L345.1,663.3 L347.3,678.6 L349.3,676.1 L351.5,668.9 L353.7,677.2 L357.8,674.9 L360.0,672.7 L362.2,676.9 L364.3,678.0 L366.5,674.8 L368.7,663.1 L370.9,676.6 L373.0,677.4 L375.2,676.6 L377.4,668.5 L379.6,676.1 L382.1,675.2 L384.7,676.9 L386.9,671.0 L389.1,677.4 L400.0,676.0 L402.0,675.7 L404.2,664.8 L406.4,678.9 L408.5,674.7 L410.7,672.2 L412.9,679.4 L416.5,676.3 L418.7,663.6 L420.9,676.9 L424.6,676.7 L426.8,666.3 L429.0,676.5 L432.4,674.4 L435.8,674.7 L438.0,672.2 L440.2,678.2 L444.3,675.8 L448.4,676.1 L450.6,671.7 L452.8,675.9 L455.4,677.2 L458.0,676.0 L460.2,667.9 L462.4,675.8 L464.8,674.7 L467.2,675.7 L469.4,669.8 L471.6,677.8 L475.1,676.1 L478.5,675.1 L480.7,665.3 L482.9,675.7 L487.0,673.9 L489.2,663.4 L491.4,674.5 L494.6,674.7 L496.8,668.6 L499.0,674.3 L500.0,674.0 L510.0,668.0 L514.1,669.3 L516.3,656.2 L518.5,672.1 L522.1,667.1 L524.3,664.2 L526.5,670.2 L529.9,668.0 L533.3,667.6 L535.5,661.2 L537.7,670.8 L541.0,669.6 L544.2,669.3 L546.4,658.8 L548.6,669.0 L552.5,667.5 L556.3,668.7 L558.5,661.9 L560.7,671.6 L563.9,668.0 L566.1,663.2 L568.3,669.3 L572.3,669.2 L576.3,668.4 L578.5,661.9 L580.7,672.9 L590.0,669.0 L593.4,670.5 L595.6,660.6 L597.8,674.5 L600.3,671.0 L602.5,660.3 L604.7,675.3 L608.8,670.5 L612.9,673.1 L615.1,669.8 L617.3,675.2 L620.0,675.0 L622.9,677.1 L625.9,674.6 L628.1,663.3 L630.3,676.7 L633.9,675.6 L636.1,662.4 L638.3,675.3 L641.3,675.5 L644.3,674.1 L646.5,668.1 L648.7,675.4 L651.9,674.2 L654.1,665.8 L656.3,677.4 L659.5,673.5 L661.7,668.5 L663.9,677.4 L667.0,674.2 L669.2,669.7 L671.4,677.9 L674.2,672.5 L677.1,673.6 L679.3,667.7 L681.5,676.8 L684.6,672.5 L687.7,673.7 L689.9,664.6 L692.1,676.2 L695.9,674.0 L698.1,662.0 L700.3,675.7 L703.2,673.8 L706.1,674.2 L708.3,662.8 L710.5,678.4 L712.7,672.9 L714.8,675.0 L717.0,669.3 L719.2,674.4 L723.3,674.0 L727.3,675.1 L729.5,667.2 L731.7,677.8 L734.3,672.6 L736.8,673.0 L739.0,665.7 L741.2,676.8 L745.3,672.1 L749.3,674.5 L751.5,667.5 L753.7,676.2 L756.6,673.6 L758.8,665.9 L761.0,677.8 L763.5,674.1 L765.7,663.0 L767.9,677.9 L771.1,673.1 L773.3,661.6 L775.5,677.9 L777.0,674.0 L779.2,675.1 L781.4,667.1 L783.6,677.6 L786.6,675.7 L789.7,673.2 L791.9,663.2 L794.1,675.0 L796.4,675.8 L798.7,674.9 L800.9,669.3 L803.1,675.0 L805.4,674.2 L807.7,673.8 L809.9,669.9 L812.1,675.1 L815.6,676.1 L819.0,673.0 L821.2,665.5 L823.4,677.2 L825.5,675.0 L827.7,670.0 L829.9,676.6 L832.7,674.9 L835.5,673.7 L837.7,667.0 L839.9,676.6 L842.3,675.0 L844.7,674.1 L846.9,666.9 L849.1,674.4 L852.2,674.2 L855.2,673.6 L857.4,663.7 L859.6,677.4 L862.2,672.7 L864.7,674.3 L866.9,670.3 L869.1,674.9 L871.5,672.3 L873.9,674.2 L876.1,666.3 L878.3,674.6 L881.4,672.3 L884.5,675.0 L886.7,663.7 L888.9,676.5 L891.1,674.5 L893.3,667.7 L895.5,678.3 L898.3,675.4 L900.5,661.5 L902.7,677.4 L906.4,673.0 L910.2,675.7 L912.4,666.6 L914.6,678.4 L918.7,672.9 L922.8,675.3 L925.0,662.3 L927.2,674.8 L929.3,675.9 L931.4,673.8 L933.6,662.6 L935.8,675.7 L939.6,672.9 L943.3,674.7 L945.5,662.5 L947.7,675.5 L951.4,674.7 L953.6,668.5 L955.8,674.8 L958.9,673.9 L961.1,662.4 L963.3,677.4 L967.3,673.1 L971.3,675.5 L973.5,670.6 L975.7,676.9 L978.9,674.1 L982.0,675.7 L984.2,666.3 L986.4,677.1 L990.4,672.9 L994.4,676.1 L996.6,665.6 L998.8,676.4 L1002.4,673.7 L1006.1,676.1 L1008.3,666.1 L1010.5,676.4 L1014.1,674.6 L1017.7,674.1 L1019.9,664.5 L1022.1,675.2 L1033.0,675.0 L1034.5,690.0 L1035.5,722.0 L1036.5,731.0 L1037.5,722.0 L1038.5,690.0 L1039.5,670.0 L1043.1,670.5 L1045.3,657.3 L1047.5,672.6 L1050.7,669.4 L1053.9,669.2 L1056.1,667.2 L1058.3,671.2 L1061.4,670.4 L1064.4,670.8 L1066.6,658.9 L1068.8,671.5 L1072.2,671.4 L1074.4,667.9 L1076.6,671.2 L1078.8,669.3 L1080.9,671.0 L1083.1,666.1 L1085.3,673.8 L1088.3,670.1 L1091.2,671.9 L1093.4,664.0 L1095.6,672.3 L1099.8,670.6 L1104.0,671.2 L1106.2,668.2 L1108.4,674.7 L1112.3,673.7 L1116.3,672.2 L1118.5,666.9 L1120.7,672.6 L1123.8,673.0 L1127.0,672.4 L1129.2,663.4 L1131.4,674.7 L1135.6,674.2 L1139.8,672.5 L1142.0,661.2 L1144.2,673.5 L1146.9,672.9 L1149.7,672.8 L1151.9,670.0 L1154.1,676.7 L1156.0,673.8 L1158.2,661.3 L1160.4,674.4 L1163.6,674.2 L1165.8,665.9 L1168.0,676.6 L1171.7,672.6 L1175.5,673.8 L1177.7,668.4 L1179.9,674.6 L1183.9,676.0 L1187.9,675.2 L1190.1,671.7 L1192.3,678.2 L1195.8,674.8 L1199.3,675.7 L1201.5,667.6 L1203.7,676.1 L1206.2,674.6 L1208.4,672.0 L1210.6,676.8 L1214.2,676.5 L1217.7,676.5 L1219.9,665.6 L1222.1,676.8 L1229.0,676.0 L1231.4,677.4 L1233.9,676.1 L1236.1,670.3 L1238.3,678.6 L1242.5,674.6 L1246.8,677.0 L1249.0,672.8 L1251.2,677.0 L1254.7,676.6 L1256.9,663.6 L1259.1,679.0 L1263.1,677.0 L1265.3,669.7 L1267.5,677.0 L1271.6,676.7 L1275.7,676.5 L1277.9,666.3 L1280.1,679.9 L1282.6,677.7 L1285.2,676.5 L1287.4,664.4 L1289.6,677.7 L1293.0,676.4 L1296.5,675.5 L1298.7,670.9 L1300.9,678.5 L1303.2,677.0 L1305.4,671.6 L1307.6,676.1 L1310.2,677.1 L1312.4,669.6 L1314.6,676.6 L1316.6,674.9 L1318.8,666.1 L1321.0,678.5 L1324.3,677.2 L1327.6,674.9 L1329.8,667.1 L1332.0,677.5 L1335.8,677.6 L1339.6,677.0 L1341.8,672.3 L1344.0,679.5 L1348.1,678.2 L1352.2,675.0 L1354.4,670.9 L1356.6,676.4 L1358.6,676.9 L1360.8,664.9 L1363.0,678.5 L1366.8,676.7 L1370.6,675.5 L1372.8,672.0 L1375.0,676.4 L1378.5,674.5 L1382.1,675.5 L1384.3,668.8 L1386.5,676.1 L1390.0,676.0 L1391.5,720.0 L1394.0,721.0 L1396.0,709.0 L1398.0,721.0 L1400.0,709.0 L1402.0,720.0 L1404.0,740.0 L1425.0,740.0 L1427.0,743.0 L1441.0,743.0 L1441.0,745.7 L0.0,745.7 Z" fill="#dbeef2"/><path d="M0.0,671.0 L3.0,721.0 L5.0,667.0 L8.0,669.0 L10.8,670.3 L13.6,668.2 L15.8,659.1 L18.0,671.3 L21.6,670.5 L25.1,669.4 L27.3,666.6 L29.5,673.9 L32.2,670.2 L34.4,664.0 L36.6,671.7 L40.1,673.1 L43.6,670.3 L45.8,661.5 L48.0,672.4 L50.8,670.8 L53.7,670.7 L55.9,667.0 L58.1,672.6 L62.1,671.9 L66.2,671.5 L68.4,660.2 L70.6,676.4 L73.1,670.7 L75.6,671.9 L77.8,668.9 L80.0,674.3 L82.4,672.4 L84.6,667.6 L86.8,675.6 L100.0,674.0 L103.5,673.6 L107.0,673.8 L109.2,665.8 L111.4,675.6 L115.6,673.0 L117.8,668.3 L120.0,678.0 L122.7,674.2 L124.9,664.9 L127.1,677.6 L130.4,673.6 L132.6,668.7 L134.8,675.8 L137.3,676.5 L139.7,675.1 L141.9,662.6 L144.1,674.4 L146.2,674.8 L148.4,662.4 L150.6,676.2 L153.5,671.9 L156.5,674.1 L158.7,662.1 L160.9,677.7 L164.8,676.8 L168.7,673.8 L170.9,670.4 L173.1,675.1 L175.8,675.4 L178.5,675.6 L180.7,664.3 L182.9,677.1 L186.5,674.4 L190.1,674.7 L192.3,671.2 L194.5,677.8 L197.9,675.7 L200.1,665.2 L202.3,675.9 L205.0,674.1 L207.2,665.4 L209.4,677.5 L212.0,673.7 L214.2,666.5 L216.4,677.1 L218.6,673.4 L220.9,675.1 L223.1,671.7 L225.3,676.0 L227.8,677.1 L230.3,675.2 L232.5,663.0 L234.7,676.8 L238.2,674.3 L240.4,662.3 L242.6,677.8 L246.5,673.8 L248.7,667.0 L250.9,677.7 L253.3,673.8 L255.6,675.5 L257.8,662.8 L260.0,676.0 L262.1,674.7 L264.3,667.9 L266.5,677.8 L269.7,675.9 L271.9,664.8 L274.1,677.2 L277.3,676.4 L279.5,669.1 L281.7,678.5 L285.1,674.5 L287.3,664.6 L289.5,676.4 L293.8,675.3 L298.0,674.5 L300.2,670.1 L302.4,677.0 L305.6,677.6 L308.8,674.5 L311.0,668.5 L313.2,676.3 L317.6,673.7 L321.9,674.4 L324.1,671.9 L326.3,677.1 L330.3,677.5 L334.4,676.1 L336.6,662.6 L338.8,679.3 L342.9,674.8 L345.1,663.3 L347.3,678.6 L349.3,676.1 L351.5,668.9 L353.7,677.2 L357.8,674.9 L360.0,672.7 L362.2,676.9 L364.3,678.0 L366.5,674.8 L368.7,663.1 L370.9,676.6 L373.0,677.4 L375.2,676.6 L377.4,668.5 L379.6,676.1 L382.1,675.2 L384.7,676.9 L386.9,671.0 L389.1,677.4 L400.0,676.0 L402.0,675.7 L404.2,664.8 L406.4,678.9 L408.5,674.7 L410.7,672.2 L412.9,679.4 L416.5,676.3 L418.7,663.6 L420.9,676.9 L424.6,676.7 L426.8,666.3 L429.0,676.5 L432.4,674.4 L435.8,674.7 L438.0,672.2 L440.2,678.2 L444.3,675.8 L448.4,676.1 L450.6,671.7 L452.8,675.9 L455.4,677.2 L458.0,676.0 L460.2,667.9 L462.4,675.8 L464.8,674.7 L467.2,675.7 L469.4,669.8 L471.6,677.8 L475.1,676.1 L478.5,675.1 L480.7,665.3 L482.9,675.7 L487.0,673.9 L489.2,663.4 L491.4,674.5 L494.6,674.7 L496.8,668.6 L499.0,674.3 L500.0,674.0 L510.0,668.0 L514.1,669.3 L516.3,656.2 L518.5,672.1 L522.1,667.1 L524.3,664.2 L526.5,670.2 L529.9,668.0 L533.3,667.6 L535.5,661.2 L537.7,670.8 L541.0,669.6 L544.2,669.3 L546.4,658.8 L548.6,669.0 L552.5,667.5 L556.3,668.7 L558.5,661.9 L560.7,671.6 L563.9,668.0 L566.1,663.2 L568.3,669.3 L572.3,669.2 L576.3,668.4 L578.5,661.9 L580.7,672.9 L590.0,669.0 L593.4,670.5 L595.6,660.6 L597.8,674.5 L600.3,671.0 L602.5,660.3 L604.7,675.3 L608.8,670.5 L612.9,673.1 L615.1,669.8 L617.3,675.2 L620.0,675.0 L622.9,677.1 L625.9,674.6 L628.1,663.3 L630.3,676.7 L633.9,675.6 L636.1,662.4 L638.3,675.3 L641.3,675.5 L644.3,674.1 L646.5,668.1 L648.7,675.4 L651.9,674.2 L654.1,665.8 L656.3,677.4 L659.5,673.5 L661.7,668.5 L663.9,677.4 L667.0,674.2 L669.2,669.7 L671.4,677.9 L674.2,672.5 L677.1,673.6 L679.3,667.7 L681.5,676.8 L684.6,672.5 L687.7,673.7 L689.9,664.6 L692.1,676.2 L695.9,674.0 L698.1,662.0 L700.3,675.7 L703.2,673.8 L706.1,674.2 L708.3,662.8 L710.5,678.4 L712.7,672.9 L714.8,675.0 L717.0,669.3 L719.2,674.4 L723.3,674.0 L727.3,675.1 L729.5,667.2 L731.7,677.8 L734.3,672.6 L736.8,673.0 L739.0,665.7 L741.2,676.8 L745.3,672.1 L749.3,674.5 L751.5,667.5 L753.7,676.2 L756.6,673.6 L758.8,665.9 L761.0,677.8 L763.5,674.1 L765.7,663.0 L767.9,677.9 L771.1,673.1 L773.3,661.6 L775.5,677.9 L777.0,674.0 L779.2,675.1 L781.4,667.1 L783.6,677.6 L786.6,675.7 L789.7,673.2 L791.9,663.2 L794.1,675.0 L796.4,675.8 L798.7,674.9 L800.9,669.3 L803.1,675.0 L805.4,674.2 L807.7,673.8 L809.9,669.9 L812.1,675.1 L815.6,676.1 L819.0,673.0 L821.2,665.5 L823.4,677.2 L825.5,675.0 L827.7,670.0 L829.9,676.6 L832.7,674.9 L835.5,673.7 L837.7,667.0 L839.9,676.6 L842.3,675.0 L844.7,674.1 L846.9,666.9 L849.1,674.4 L852.2,674.2 L855.2,673.6 L857.4,663.7 L859.6,677.4 L862.2,672.7 L864.7,674.3 L866.9,670.3 L869.1,674.9 L871.5,672.3 L873.9,674.2 L876.1,666.3 L878.3,674.6 L881.4,672.3 L884.5,675.0 L886.7,663.7 L888.9,676.5 L891.1,674.5 L893.3,667.7 L895.5,678.3 L898.3,675.4 L900.5,661.5 L902.7,677.4 L906.4,673.0 L910.2,675.7 L912.4,666.6 L914.6,678.4 L918.7,672.9 L922.8,675.3 L925.0,662.3 L927.2,674.8 L929.3,675.9 L931.4,673.8 L933.6,662.6 L935.8,675.7 L939.6,672.9 L943.3,674.7 L945.5,662.5 L947.7,675.5 L951.4,674.7 L953.6,668.5 L955.8,674.8 L958.9,673.9 L961.1,662.4 L963.3,677.4 L967.3,673.1 L971.3,675.5 L973.5,670.6 L975.7,676.9 L978.9,674.1 L982.0,675.7 L984.2,666.3 L986.4,677.1 L990.4,672.9 L994.4,676.1 L996.6,665.6 L998.8,676.4 L1002.4,673.7 L1006.1,676.1 L1008.3,666.1 L1010.5,676.4 L1014.1,674.6 L1017.7,674.1 L1019.9,664.5 L1022.1,675.2 L1033.0,675.0 L1034.5,690.0 L1035.5,722.0 L1036.5,731.0 L1037.5,722.0 L1038.5,690.0 L1039.5,670.0 L1043.1,670.5 L1045.3,657.3 L1047.5,672.6 L1050.7,669.4 L1053.9,669.2 L1056.1,667.2 L1058.3,671.2 L1061.4,670.4 L1064.4,670.8 L1066.6,658.9 L1068.8,671.5 L1072.2,671.4 L1074.4,667.9 L1076.6,671.2 L1078.8,669.3 L1080.9,671.0 L1083.1,666.1 L1085.3,673.8 L1088.3,670.1 L1091.2,671.9 L1093.4,664.0 L1095.6,672.3 L1099.8,670.6 L1104.0,671.2 L1106.2,668.2 L1108.4,674.7 L1112.3,673.7 L1116.3,672.2 L1118.5,666.9 L1120.7,672.6 L1123.8,673.0 L1127.0,672.4 L1129.2,663.4 L1131.4,674.7 L1135.6,674.2 L1139.8,672.5 L1142.0,661.2 L1144.2,673.5 L1146.9,672.9 L1149.7,672.8 L1151.9,670.0 L1154.1,676.7 L1156.0,673.8 L1158.2,661.3 L1160.4,674.4 L1163.6,674.2 L1165.8,665.9 L1168.0,676.6 L1171.7,672.6 L1175.5,673.8 L1177.7,668.4 L1179.9,674.6 L1183.9,676.0 L1187.9,675.2 L1190.1,671.7 L1192.3,678.2 L1195.8,674.8 L1199.3,675.7 L1201.5,667.6 L1203.7,676.1 L1206.2,674.6 L1208.4,672.0 L1210.6,676.8 L1214.2,676.5 L1217.7,676.5 L1219.9,665.6 L1222.1,676.8 L1229.0,676.0 L1231.4,677.4 L1233.9,676.1 L1236.1,670.3 L1238.3,678.6 L1242.5,674.6 L1246.8,677.0 L1249.0,672.8 L1251.2,677.0 L1254.7,676.6 L1256.9,663.6 L1259.1,679.0 L1263.1,677.0 L1265.3,669.7 L1267.5,677.0 L1271.6,676.7 L1275.7,676.5 L1277.9,666.3 L1280.1,679.9 L1282.6,677.7 L1285.2,676.5 L1287.4,664.4 L1289.6,677.7 L1293.0,676.4 L1296.5,675.5 L1298.7,670.9 L1300.9,678.5 L1303.2,677.0 L1305.4,671.6 L1307.6,676.1 L1310.2,677.1 L1312.4,669.6 L1314.6,676.6 L1316.6,674.9 L1318.8,666.1 L1321.0,678.5 L1324.3,677.2 L1327.6,674.9 L1329.8,667.1 L1332.0,677.5 L1335.8,677.6 L1339.6,677.0 L1341.8,672.3 L1344.0,679.5 L1348.1,678.2 L1352.2,675.0 L1354.4,670.9 L1356.6,676.4 L1358.6,676.9 L1360.8,664.9 L1363.0,678.5 L1366.8,676.7 L1370.6,675.5 L1372.8,672.0 L1375.0,676.4 L1378.5,674.5 L1382.1,675.5 L1384.3,668.8 L1386.5,676.1 L1390.0,676.0 L1391.5,720.0 L1394.0,721.0 L1396.0,709.0 L1398.0,721.0 L1400.0,709.0 L1402.0,720.0 L1404.0,740.0 L1425.0,740.0 L1427.0,743.0 L1441.0,743.0" fill="none" stroke="#2bb0b0" stroke-width="1.1" stroke-linejoin="round"/><line x1="0" y1="745.7" x2="1441" y2="745.7" stroke="#6cc8c8" stroke-width="1.6"/></g>
<g clip-path="url(#cun)"><path d="M0.0,860.0 L2.0,885.0 L4.0,890.0 L6.0,832.0 L8.0,895.0 L10.0,900.0 L15.0,903.0 L16.0,903.0 L17.7,899.7 L19.4,903.0 L27.5,903.0 L29.3,901.1 L31.1,903.0 L33.0,903.0 L34.9,899.8 L36.8,903.0 L42.1,903.0 L44.3,901.7 L46.5,903.0 L48.9,903.0 L50.8,900.9 L52.6,903.0 L54.6,903.0 L56.3,900.8 L57.9,903.0 L60.0,903.0 L61.6,896.4 L63.1,903.0 L67.2,903.0 L68.5,900.2 L69.8,903.0 L79.2,903.0 L81.5,901.2 L83.9,903.0 L86.2,903.0 L88.5,901.6 L90.9,903.0 L92.2,903.0 L93.7,897.9 L95.2,903.0 L104.5,903.0 L105.9,901.4 L107.3,903.0 L113.7,903.0 L115.9,901.0 L118.1,903.0 L119.5,903.0 L121.9,901.0 L124.2,903.0 L124.8,903.0 L126.9,901.5 L129.1,903.0 L131.2,903.0 L132.7,901.9 L134.2,903.0 L137.5,903.0 L140.0,901.8 L142.4,903.0 L144.3,903.0 L145.6,895.6 L146.9,903.0 L155.6,903.0 L156.9,900.2 L158.3,903.0 L158.8,903.0 L160.5,902.1 L162.2,903.0 L171.1,903.0 L172.8,900.3 L174.5,903.0 L183.9,903.0 L186.1,901.7 L188.2,903.0 L201.9,903.0 L203.2,900.2 L204.6,903.0 L212.5,903.0 L214.5,901.0 L216.5,903.0 L222.3,903.0 L224.5,900.1 L226.7,903.0 L231.2,903.0 L233.0,885.0 L234.8,903.0 L243.2,903.0 L245.0,891.0 L246.8,903.0 L251.2,903.0 L253.0,895.0 L254.8,903.0 L258.7,903.0 L260.1,899.3 L261.4,903.0 L264.2,903.0 L266.0,888.0 L267.8,903.0 L268.0,903.0 L269.8,901.1 L271.5,903.0 L273.2,903.0 L274.7,901.6 L276.2,903.0 L281.7,903.0 L283.4,899.0 L285.1,903.0 L285.2,903.0 L287.0,895.0 L288.8,903.0 L289.2,903.0 L291.0,813.0 L292.8,903.0 L295.4,903.0 L297.0,895.6 L298.7,903.0 L315.9,903.0 L317.6,901.6 L319.4,903.0 L319.8,903.0 L321.4,899.6 L323.0,903.0 L323.6,903.0 L325.4,900.9 L327.1,903.0 L336.4,903.0 L338.7,898.7 L341.1,903.0 L343.1,903.0 L345.1,898.6 L347.1,903.0 L347.2,903.0 L349.2,896.1 L351.3,903.0 L351.9,903.0 L353.4,901.9 L354.9,903.0 L356.8,903.0 L359.2,901.9 L361.6,903.0 L363.6,903.0 L365.5,897.8 L367.5,903.0 L378.7,903.0 L380.6,899.8 L382.5,903.0 L384.3,903.0 L386.2,897.9 L388.2,903.0 L388.8,903.0 L390.7,901.9 L392.5,903.0 L403.2,903.0 L405.0,898.5 L406.8,903.0 L412.7,903.0 L415.2,901.1 L417.6,903.0 L421.7,903.0 L423.8,900.3 L425.9,903.0 L428.2,903.0 L430.1,894.2 L431.9,903.0 L439.1,903.0 L440.8,898.2 L442.5,903.0 L448.0,903.0 L449.7,901.1 L451.5,903.0 L471.1,903.0 L472.7,901.4 L474.3,903.0 L480.1,903.0 L482.4,899.6 L484.8,903.0 L486.1,903.0 L487.3,901.5 L488.6,903.0 L517.0,903.0 L519.2,902.1 L521.5,903.0 L529.9,903.0 L531.7,891.0 L533.5,903.0 L534.0,903.0 L535.6,901.1 L537.2,903.0 L543.1,903.0 L544.3,900.5 L545.6,903.0 L554.2,903.0 L556.0,887.0 L557.8,903.0 L558.9,903.0 L560.7,888.0 L562.5,903.0 L562.7,903.0 L564.7,902.0 L566.7,903.0 L567.3,903.0 L568.5,902.2 L569.7,903.0 L571.4,903.0 L572.7,895.4 L574.0,903.0 L576.2,903.0 L578.3,902.2 L580.5,903.0 L583.6,903.0 L585.8,899.2 L587.9,903.0 L601.2,903.0 L603.0,888.0 L604.8,903.0 L605.5,903.0 L607.8,900.1 L610.0,903.0 L610.2,903.0 L611.6,899.6 L613.1,903.0 L617.4,903.0 L619.2,900.5 L620.9,903.0 L622.6,903.0 L624.3,899.0 L626.0,903.0 L630.8,903.0 L633.3,899.1 L635.7,903.0 L640.5,903.0 L642.6,894.9 L644.8,903.0 L646.8,903.0 L649.3,900.3 L651.8,903.0 L656.8,903.0 L658.5,897.8 L660.1,903.0 L669.4,903.0 L671.1,901.6 L672.9,903.0 L679.0,903.0 L681.3,898.6 L683.5,903.0 L697.7,903.0 L699.6,902.0 L701.5,903.0 L703.5,903.0 L705.9,899.4 L708.3,903.0 L715.6,903.0 L717.8,899.4 L720.0,903.0 L721.2,903.0 L723.4,898.9 L725.6,903.0 L738.2,903.0 L739.6,901.8 L741.1,903.0 L742.8,903.0 L744.5,900.5 L746.3,903.0 L747.6,903.0 L750.1,902.1 L752.6,903.0 L753.5,903.0 L755.7,900.2 L757.9,903.0 L763.4,903.0 L765.7,893.0 L768.1,903.0 L784.5,903.0 L786.0,901.4 L787.5,903.0 L787.9,903.0 L789.8,901.4 L791.8,903.0 L793.9,903.0 L796.3,895.6 L798.7,903.0 L798.9,903.0 L800.2,900.5 L801.6,903.0 L804.0,903.0 L806.0,899.8 L808.0,903.0 L813.6,903.0 L816.1,901.2 L818.5,903.0 L821.0,903.0 L822.5,901.4 L824.1,903.0 L840.9,903.0 L843.1,901.2 L845.3,903.0 L850.5,903.0 L851.8,898.7 L853.2,903.0 L854.0,903.0 L855.8,901.2 L857.6,903.0 L858.1,903.0 L860.1,901.2 L862.2,903.0 L864.8,903.0 L866.3,896.2 L867.8,903.0 L874.8,903.0 L876.1,900.3 L877.5,903.0 L883.7,903.0 L885.9,900.7 L888.2,903.0 L891.8,903.0 L894.0,901.4 L896.1,903.0 L897.5,903.0 L899.0,897.4 L900.6,903.0 L901.6,903.0 L903.9,900.9 L906.2,903.0 L907.0,903.0 L908.6,900.1 L910.2,903.0 L912.5,903.0 L913.8,893.8 L915.0,903.0 L919.9,903.0 L921.5,900.8 L923.0,903.0 L923.5,903.0 L926.0,893.0 L928.5,903.0 L930.8,903.0 L933.2,900.8 L935.5,903.0 L943.6,903.0 L945.9,901.5 L948.2,903.0 L949.5,903.0 L951.9,900.4 L954.3,903.0 L954.8,903.0 L956.3,901.2 L957.7,903.0 L962.2,903.0 L964.2,901.3 L966.2,903.0 L969.2,903.0 L971.0,888.0 L972.8,903.0 L976.9,903.0 L979.1,901.4 L981.2,903.0 L992.0,903.0 L994.4,901.5 L996.8,903.0 L1000.8,903.0 L1002.5,897.9 L1004.1,903.0 L1004.5,903.0 L1005.8,899.7 L1007.0,903.0 L1008.3,903.0 L1009.6,900.1 L1011.0,903.0 L1017.4,903.0 L1019.1,899.0 L1020.7,903.0 L1022.6,903.0 L1025.1,897.4 L1027.5,903.0 L1028.7,903.0 L1030.6,900.0 L1032.5,903.0 L1035.2,903.0 L1037.0,886.0 L1038.8,903.0 L1040.4,903.0 L1042.5,901.3 L1044.6,903.0 L1045.1,903.0 L1047.0,899.7 L1049.0,903.0 L1056.7,903.0 L1058.6,901.2 L1060.4,903.0 L1061.7,903.0 L1063.4,901.2 L1065.1,903.0 L1065.5,903.0 L1066.9,897.6 L1068.2,903.0 L1076.2,903.0 L1078.0,870.0 L1079.8,903.0 L1082.9,903.0 L1085.1,895.8 L1087.3,903.0 L1088.1,903.0 L1089.9,900.7 L1091.7,903.0 L1103.4,903.0 L1105.9,900.0 L1108.3,903.0 L1110.6,903.0 L1112.7,900.4 L1114.7,903.0 L1115.6,903.0 L1117.4,901.4 L1119.1,903.0 L1120.4,903.0 L1122.8,901.2 L1125.3,903.0 L1143.5,903.0 L1145.5,896.3 L1147.5,903.0 L1148.2,903.0 L1150.6,900.4 L1153.0,903.0 L1153.8,903.0 L1155.1,899.4 L1156.5,903.0 L1161.5,903.0 L1163.4,900.2 L1165.3,903.0 L1165.7,903.0 L1167.2,901.2 L1168.8,903.0 L1169.8,903.0 L1171.1,900.9 L1172.5,903.0 L1177.7,903.0 L1179.1,899.4 L1180.6,903.0 L1182.4,903.0 L1184.3,899.9 L1186.3,903.0 L1187.5,903.0 L1189.0,900.9 L1190.5,903.0 L1191.8,903.0 L1193.0,899.7 L1194.2,903.0 L1197.8,903.0 L1199.4,900.1 L1200.9,903.0 L1203.4,903.0 L1204.8,898.5 L1206.2,903.0 L1209.7,903.0 L1211.5,900.5 L1213.3,903.0 L1215.1,903.0 L1217.5,901.0 L1220.0,903.0 L1221.8,903.0 L1223.5,900.7 L1225.2,903.0 L1234.9,903.0 L1237.1,898.3 L1239.3,903.0 L1252.8,903.0 L1254.7,894.4 L1256.7,903.0 L1262.3,903.0 L1264.1,900.0 L1265.9,903.0 L1267.1,903.0 L1268.8,900.3 L1270.5,903.0 L1271.9,903.0 L1274.1,900.2 L1276.3,903.0 L1278.4,903.0 L1279.9,899.8 L1281.3,903.0 L1282.1,903.0 L1284.0,899.3 L1286.0,903.0 L1293.0,903.0 L1441.0,903.0 L1441.0,903.2 L0.0,903.2 Z" fill="#fbf7ec"/><path d="M0.0,860.0 L2.0,885.0 L4.0,890.0 L6.0,832.0 L8.0,895.0 L10.0,900.0 L15.0,903.0 L16.0,903.0 L17.7,899.7 L19.4,903.0 L27.5,903.0 L29.3,901.1 L31.1,903.0 L33.0,903.0 L34.9,899.8 L36.8,903.0 L42.1,903.0 L44.3,901.7 L46.5,903.0 L48.9,903.0 L50.8,900.9 L52.6,903.0 L54.6,903.0 L56.3,900.8 L57.9,903.0 L60.0,903.0 L61.6,896.4 L63.1,903.0 L67.2,903.0 L68.5,900.2 L69.8,903.0 L79.2,903.0 L81.5,901.2 L83.9,903.0 L86.2,903.0 L88.5,901.6 L90.9,903.0 L92.2,903.0 L93.7,897.9 L95.2,903.0 L104.5,903.0 L105.9,901.4 L107.3,903.0 L113.7,903.0 L115.9,901.0 L118.1,903.0 L119.5,903.0 L121.9,901.0 L124.2,903.0 L124.8,903.0 L126.9,901.5 L129.1,903.0 L131.2,903.0 L132.7,901.9 L134.2,903.0 L137.5,903.0 L140.0,901.8 L142.4,903.0 L144.3,903.0 L145.6,895.6 L146.9,903.0 L155.6,903.0 L156.9,900.2 L158.3,903.0 L158.8,903.0 L160.5,902.1 L162.2,903.0 L171.1,903.0 L172.8,900.3 L174.5,903.0 L183.9,903.0 L186.1,901.7 L188.2,903.0 L201.9,903.0 L203.2,900.2 L204.6,903.0 L212.5,903.0 L214.5,901.0 L216.5,903.0 L222.3,903.0 L224.5,900.1 L226.7,903.0 L231.2,903.0 L233.0,885.0 L234.8,903.0 L243.2,903.0 L245.0,891.0 L246.8,903.0 L251.2,903.0 L253.0,895.0 L254.8,903.0 L258.7,903.0 L260.1,899.3 L261.4,903.0 L264.2,903.0 L266.0,888.0 L267.8,903.0 L268.0,903.0 L269.8,901.1 L271.5,903.0 L273.2,903.0 L274.7,901.6 L276.2,903.0 L281.7,903.0 L283.4,899.0 L285.1,903.0 L285.2,903.0 L287.0,895.0 L288.8,903.0 L289.2,903.0 L291.0,813.0 L292.8,903.0 L295.4,903.0 L297.0,895.6 L298.7,903.0 L315.9,903.0 L317.6,901.6 L319.4,903.0 L319.8,903.0 L321.4,899.6 L323.0,903.0 L323.6,903.0 L325.4,900.9 L327.1,903.0 L336.4,903.0 L338.7,898.7 L341.1,903.0 L343.1,903.0 L345.1,898.6 L347.1,903.0 L347.2,903.0 L349.2,896.1 L351.3,903.0 L351.9,903.0 L353.4,901.9 L354.9,903.0 L356.8,903.0 L359.2,901.9 L361.6,903.0 L363.6,903.0 L365.5,897.8 L367.5,903.0 L378.7,903.0 L380.6,899.8 L382.5,903.0 L384.3,903.0 L386.2,897.9 L388.2,903.0 L388.8,903.0 L390.7,901.9 L392.5,903.0 L403.2,903.0 L405.0,898.5 L406.8,903.0 L412.7,903.0 L415.2,901.1 L417.6,903.0 L421.7,903.0 L423.8,900.3 L425.9,903.0 L428.2,903.0 L430.1,894.2 L431.9,903.0 L439.1,903.0 L440.8,898.2 L442.5,903.0 L448.0,903.0 L449.7,901.1 L451.5,903.0 L471.1,903.0 L472.7,901.4 L474.3,903.0 L480.1,903.0 L482.4,899.6 L484.8,903.0 L486.1,903.0 L487.3,901.5 L488.6,903.0 L517.0,903.0 L519.2,902.1 L521.5,903.0 L529.9,903.0 L531.7,891.0 L533.5,903.0 L534.0,903.0 L535.6,901.1 L537.2,903.0 L543.1,903.0 L544.3,900.5 L545.6,903.0 L554.2,903.0 L556.0,887.0 L557.8,903.0 L558.9,903.0 L560.7,888.0 L562.5,903.0 L562.7,903.0 L564.7,902.0 L566.7,903.0 L567.3,903.0 L568.5,902.2 L569.7,903.0 L571.4,903.0 L572.7,895.4 L574.0,903.0 L576.2,903.0 L578.3,902.2 L580.5,903.0 L583.6,903.0 L585.8,899.2 L587.9,903.0 L601.2,903.0 L603.0,888.0 L604.8,903.0 L605.5,903.0 L607.8,900.1 L610.0,903.0 L610.2,903.0 L611.6,899.6 L613.1,903.0 L617.4,903.0 L619.2,900.5 L620.9,903.0 L622.6,903.0 L624.3,899.0 L626.0,903.0 L630.8,903.0 L633.3,899.1 L635.7,903.0 L640.5,903.0 L642.6,894.9 L644.8,903.0 L646.8,903.0 L649.3,900.3 L651.8,903.0 L656.8,903.0 L658.5,897.8 L660.1,903.0 L669.4,903.0 L671.1,901.6 L672.9,903.0 L679.0,903.0 L681.3,898.6 L683.5,903.0 L697.7,903.0 L699.6,902.0 L701.5,903.0 L703.5,903.0 L705.9,899.4 L708.3,903.0 L715.6,903.0 L717.8,899.4 L720.0,903.0 L721.2,903.0 L723.4,898.9 L725.6,903.0 L738.2,903.0 L739.6,901.8 L741.1,903.0 L742.8,903.0 L744.5,900.5 L746.3,903.0 L747.6,903.0 L750.1,902.1 L752.6,903.0 L753.5,903.0 L755.7,900.2 L757.9,903.0 L763.4,903.0 L765.7,893.0 L768.1,903.0 L784.5,903.0 L786.0,901.4 L787.5,903.0 L787.9,903.0 L789.8,901.4 L791.8,903.0 L793.9,903.0 L796.3,895.6 L798.7,903.0 L798.9,903.0 L800.2,900.5 L801.6,903.0 L804.0,903.0 L806.0,899.8 L808.0,903.0 L813.6,903.0 L816.1,901.2 L818.5,903.0 L821.0,903.0 L822.5,901.4 L824.1,903.0 L840.9,903.0 L843.1,901.2 L845.3,903.0 L850.5,903.0 L851.8,898.7 L853.2,903.0 L854.0,903.0 L855.8,901.2 L857.6,903.0 L858.1,903.0 L860.1,901.2 L862.2,903.0 L864.8,903.0 L866.3,896.2 L867.8,903.0 L874.8,903.0 L876.1,900.3 L877.5,903.0 L883.7,903.0 L885.9,900.7 L888.2,903.0 L891.8,903.0 L894.0,901.4 L896.1,903.0 L897.5,903.0 L899.0,897.4 L900.6,903.0 L901.6,903.0 L903.9,900.9 L906.2,903.0 L907.0,903.0 L908.6,900.1 L910.2,903.0 L912.5,903.0 L913.8,893.8 L915.0,903.0 L919.9,903.0 L921.5,900.8 L923.0,903.0 L923.5,903.0 L926.0,893.0 L928.5,903.0 L930.8,903.0 L933.2,900.8 L935.5,903.0 L943.6,903.0 L945.9,901.5 L948.2,903.0 L949.5,903.0 L951.9,900.4 L954.3,903.0 L954.8,903.0 L956.3,901.2 L957.7,903.0 L962.2,903.0 L964.2,901.3 L966.2,903.0 L969.2,903.0 L971.0,888.0 L972.8,903.0 L976.9,903.0 L979.1,901.4 L981.2,903.0 L992.0,903.0 L994.4,901.5 L996.8,903.0 L1000.8,903.0 L1002.5,897.9 L1004.1,903.0 L1004.5,903.0 L1005.8,899.7 L1007.0,903.0 L1008.3,903.0 L1009.6,900.1 L1011.0,903.0 L1017.4,903.0 L1019.1,899.0 L1020.7,903.0 L1022.6,903.0 L1025.1,897.4 L1027.5,903.0 L1028.7,903.0 L1030.6,900.0 L1032.5,903.0 L1035.2,903.0 L1037.0,886.0 L1038.8,903.0 L1040.4,903.0 L1042.5,901.3 L1044.6,903.0 L1045.1,903.0 L1047.0,899.7 L1049.0,903.0 L1056.7,903.0 L1058.6,901.2 L1060.4,903.0 L1061.7,903.0 L1063.4,901.2 L1065.1,903.0 L1065.5,903.0 L1066.9,897.6 L1068.2,903.0 L1076.2,903.0 L1078.0,870.0 L1079.8,903.0 L1082.9,903.0 L1085.1,895.8 L1087.3,903.0 L1088.1,903.0 L1089.9,900.7 L1091.7,903.0 L1103.4,903.0 L1105.9,900.0 L1108.3,903.0 L1110.6,903.0 L1112.7,900.4 L1114.7,903.0 L1115.6,903.0 L1117.4,901.4 L1119.1,903.0 L1120.4,903.0 L1122.8,901.2 L1125.3,903.0 L1143.5,903.0 L1145.5,896.3 L1147.5,903.0 L1148.2,903.0 L1150.6,900.4 L1153.0,903.0 L1153.8,903.0 L1155.1,899.4 L1156.5,903.0 L1161.5,903.0 L1163.4,900.2 L1165.3,903.0 L1165.7,903.0 L1167.2,901.2 L1168.8,903.0 L1169.8,903.0 L1171.1,900.9 L1172.5,903.0 L1177.7,903.0 L1179.1,899.4 L1180.6,903.0 L1182.4,903.0 L1184.3,899.9 L1186.3,903.0 L1187.5,903.0 L1189.0,900.9 L1190.5,903.0 L1191.8,903.0 L1193.0,899.7 L1194.2,903.0 L1197.8,903.0 L1199.4,900.1 L1200.9,903.0 L1203.4,903.0 L1204.8,898.5 L1206.2,903.0 L1209.7,903.0 L1211.5,900.5 L1213.3,903.0 L1215.1,903.0 L1217.5,901.0 L1220.0,903.0 L1221.8,903.0 L1223.5,900.7 L1225.2,903.0 L1234.9,903.0 L1237.1,898.3 L1239.3,903.0 L1252.8,903.0 L1254.7,894.4 L1256.7,903.0 L1262.3,903.0 L1264.1,900.0 L1265.9,903.0 L1267.1,903.0 L1268.8,900.3 L1270.5,903.0 L1271.9,903.0 L1274.1,900.2 L1276.3,903.0 L1278.4,903.0 L1279.9,899.8 L1281.3,903.0 L1282.1,903.0 L1284.0,899.3 L1286.0,903.0 L1293.0,903.0 L1441.0,903.0" fill="none" stroke="#e2d3a6" stroke-width="1" stroke-linejoin="round"/><line x1="0" y1="903.2" x2="1441" y2="903.2" stroke="#e2d3a6" stroke-width="1.0"/></g>
<g clip-path="url(#csel)"><path d="M0.0,860.0 L2.0,885.0 L4.0,890.0 L6.0,832.0 L8.0,895.0 L10.0,900.0 L15.0,903.0 L16.0,903.0 L17.7,899.7 L19.4,903.0 L27.5,903.0 L29.3,901.1 L31.1,903.0 L33.0,903.0 L34.9,899.8 L36.8,903.0 L42.1,903.0 L44.3,901.7 L46.5,903.0 L48.9,903.0 L50.8,900.9 L52.6,903.0 L54.6,903.0 L56.3,900.8 L57.9,903.0 L60.0,903.0 L61.6,896.4 L63.1,903.0 L67.2,903.0 L68.5,900.2 L69.8,903.0 L79.2,903.0 L81.5,901.2 L83.9,903.0 L86.2,903.0 L88.5,901.6 L90.9,903.0 L92.2,903.0 L93.7,897.9 L95.2,903.0 L104.5,903.0 L105.9,901.4 L107.3,903.0 L113.7,903.0 L115.9,901.0 L118.1,903.0 L119.5,903.0 L121.9,901.0 L124.2,903.0 L124.8,903.0 L126.9,901.5 L129.1,903.0 L131.2,903.0 L132.7,901.9 L134.2,903.0 L137.5,903.0 L140.0,901.8 L142.4,903.0 L144.3,903.0 L145.6,895.6 L146.9,903.0 L155.6,903.0 L156.9,900.2 L158.3,903.0 L158.8,903.0 L160.5,902.1 L162.2,903.0 L171.1,903.0 L172.8,900.3 L174.5,903.0 L183.9,903.0 L186.1,901.7 L188.2,903.0 L201.9,903.0 L203.2,900.2 L204.6,903.0 L212.5,903.0 L214.5,901.0 L216.5,903.0 L222.3,903.0 L224.5,900.1 L226.7,903.0 L231.2,903.0 L233.0,885.0 L234.8,903.0 L243.2,903.0 L245.0,891.0 L246.8,903.0 L251.2,903.0 L253.0,895.0 L254.8,903.0 L258.7,903.0 L260.1,899.3 L261.4,903.0 L264.2,903.0 L266.0,888.0 L267.8,903.0 L268.0,903.0 L269.8,901.1 L271.5,903.0 L273.2,903.0 L274.7,901.6 L276.2,903.0 L281.7,903.0 L283.4,899.0 L285.1,903.0 L285.2,903.0 L287.0,895.0 L288.8,903.0 L289.2,903.0 L291.0,813.0 L292.8,903.0 L295.4,903.0 L297.0,895.6 L298.7,903.0 L315.9,903.0 L317.6,901.6 L319.4,903.0 L319.8,903.0 L321.4,899.6 L323.0,903.0 L323.6,903.0 L325.4,900.9 L327.1,903.0 L336.4,903.0 L338.7,898.7 L341.1,903.0 L343.1,903.0 L345.1,898.6 L347.1,903.0 L347.2,903.0 L349.2,896.1 L351.3,903.0 L351.9,903.0 L353.4,901.9 L354.9,903.0 L356.8,903.0 L359.2,901.9 L361.6,903.0 L363.6,903.0 L365.5,897.8 L367.5,903.0 L378.7,903.0 L380.6,899.8 L382.5,903.0 L384.3,903.0 L386.2,897.9 L388.2,903.0 L388.8,903.0 L390.7,901.9 L392.5,903.0 L403.2,903.0 L405.0,898.5 L406.8,903.0 L412.7,903.0 L415.2,901.1 L417.6,903.0 L421.7,903.0 L423.8,900.3 L425.9,903.0 L428.2,903.0 L430.1,894.2 L431.9,903.0 L439.1,903.0 L440.8,898.2 L442.5,903.0 L448.0,903.0 L449.7,901.1 L451.5,903.0 L471.1,903.0 L472.7,901.4 L474.3,903.0 L480.1,903.0 L482.4,899.6 L484.8,903.0 L486.1,903.0 L487.3,901.5 L488.6,903.0 L517.0,903.0 L519.2,902.1 L521.5,903.0 L529.9,903.0 L531.7,891.0 L533.5,903.0 L534.0,903.0 L535.6,901.1 L537.2,903.0 L543.1,903.0 L544.3,900.5 L545.6,903.0 L554.2,903.0 L556.0,887.0 L557.8,903.0 L558.9,903.0 L560.7,888.0 L562.5,903.0 L562.7,903.0 L564.7,902.0 L566.7,903.0 L567.3,903.0 L568.5,902.2 L569.7,903.0 L571.4,903.0 L572.7,895.4 L574.0,903.0 L576.2,903.0 L578.3,902.2 L580.5,903.0 L583.6,903.0 L585.8,899.2 L587.9,903.0 L601.2,903.0 L603.0,888.0 L604.8,903.0 L605.5,903.0 L607.8,900.1 L610.0,903.0 L610.2,903.0 L611.6,899.6 L613.1,903.0 L617.4,903.0 L619.2,900.5 L620.9,903.0 L622.6,903.0 L624.3,899.0 L626.0,903.0 L630.8,903.0 L633.3,899.1 L635.7,903.0 L640.5,903.0 L642.6,894.9 L644.8,903.0 L646.8,903.0 L649.3,900.3 L651.8,903.0 L656.8,903.0 L658.5,897.8 L660.1,903.0 L669.4,903.0 L671.1,901.6 L672.9,903.0 L679.0,903.0 L681.3,898.6 L683.5,903.0 L697.7,903.0 L699.6,902.0 L701.5,903.0 L703.5,903.0 L705.9,899.4 L708.3,903.0 L715.6,903.0 L717.8,899.4 L720.0,903.0 L721.2,903.0 L723.4,898.9 L725.6,903.0 L738.2,903.0 L739.6,901.8 L741.1,903.0 L742.8,903.0 L744.5,900.5 L746.3,903.0 L747.6,903.0 L750.1,902.1 L752.6,903.0 L753.5,903.0 L755.7,900.2 L757.9,903.0 L763.4,903.0 L765.7,893.0 L768.1,903.0 L784.5,903.0 L786.0,901.4 L787.5,903.0 L787.9,903.0 L789.8,901.4 L791.8,903.0 L793.9,903.0 L796.3,895.6 L798.7,903.0 L798.9,903.0 L800.2,900.5 L801.6,903.0 L804.0,903.0 L806.0,899.8 L808.0,903.0 L813.6,903.0 L816.1,901.2 L818.5,903.0 L821.0,903.0 L822.5,901.4 L824.1,903.0 L840.9,903.0 L843.1,901.2 L845.3,903.0 L850.5,903.0 L851.8,898.7 L853.2,903.0 L854.0,903.0 L855.8,901.2 L857.6,903.0 L858.1,903.0 L860.1,901.2 L862.2,903.0 L864.8,903.0 L866.3,896.2 L867.8,903.0 L874.8,903.0 L876.1,900.3 L877.5,903.0 L883.7,903.0 L885.9,900.7 L888.2,903.0 L891.8,903.0 L894.0,901.4 L896.1,903.0 L897.5,903.0 L899.0,897.4 L900.6,903.0 L901.6,903.0 L903.9,900.9 L906.2,903.0 L907.0,903.0 L908.6,900.1 L910.2,903.0 L912.5,903.0 L913.8,893.8 L915.0,903.0 L919.9,903.0 L921.5,900.8 L923.0,903.0 L923.5,903.0 L926.0,893.0 L928.5,903.0 L930.8,903.0 L933.2,900.8 L935.5,903.0 L943.6,903.0 L945.9,901.5 L948.2,903.0 L949.5,903.0 L951.9,900.4 L954.3,903.0 L954.8,903.0 L956.3,901.2 L957.7,903.0 L962.2,903.0 L964.2,901.3 L966.2,903.0 L969.2,903.0 L971.0,888.0 L972.8,903.0 L976.9,903.0 L979.1,901.4 L981.2,903.0 L992.0,903.0 L994.4,901.5 L996.8,903.0 L1000.8,903.0 L1002.5,897.9 L1004.1,903.0 L1004.5,903.0 L1005.8,899.7 L1007.0,903.0 L1008.3,903.0 L1009.6,900.1 L1011.0,903.0 L1017.4,903.0 L1019.1,899.0 L1020.7,903.0 L1022.6,903.0 L1025.1,897.4 L1027.5,903.0 L1028.7,903.0 L1030.6,900.0 L1032.5,903.0 L1035.2,903.0 L1037.0,886.0 L1038.8,903.0 L1040.4,903.0 L1042.5,901.3 L1044.6,903.0 L1045.1,903.0 L1047.0,899.7 L1049.0,903.0 L1056.7,903.0 L1058.6,901.2 L1060.4,903.0 L1061.7,903.0 L1063.4,901.2 L1065.1,903.0 L1065.5,903.0 L1066.9,897.6 L1068.2,903.0 L1076.2,903.0 L1078.0,870.0 L1079.8,903.0 L1082.9,903.0 L1085.1,895.8 L1087.3,903.0 L1088.1,903.0 L1089.9,900.7 L1091.7,903.0 L1103.4,903.0 L1105.9,900.0 L1108.3,903.0 L1110.6,903.0 L1112.7,900.4 L1114.7,903.0 L1115.6,903.0 L1117.4,901.4 L1119.1,903.0 L1120.4,903.0 L1122.8,901.2 L1125.3,903.0 L1143.5,903.0 L1145.5,896.3 L1147.5,903.0 L1148.2,903.0 L1150.6,900.4 L1153.0,903.0 L1153.8,903.0 L1155.1,899.4 L1156.5,903.0 L1161.5,903.0 L1163.4,900.2 L1165.3,903.0 L1165.7,903.0 L1167.2,901.2 L1168.8,903.0 L1169.8,903.0 L1171.1,900.9 L1172.5,903.0 L1177.7,903.0 L1179.1,899.4 L1180.6,903.0 L1182.4,903.0 L1184.3,899.9 L1186.3,903.0 L1187.5,903.0 L1189.0,900.9 L1190.5,903.0 L1191.8,903.0 L1193.0,899.7 L1194.2,903.0 L1197.8,903.0 L1199.4,900.1 L1200.9,903.0 L1203.4,903.0 L1204.8,898.5 L1206.2,903.0 L1209.7,903.0 L1211.5,900.5 L1213.3,903.0 L1215.1,903.0 L1217.5,901.0 L1220.0,903.0 L1221.8,903.0 L1223.5,900.7 L1225.2,903.0 L1234.9,903.0 L1237.1,898.3 L1239.3,903.0 L1252.8,903.0 L1254.7,894.4 L1256.7,903.0 L1262.3,903.0 L1264.1,900.0 L1265.9,903.0 L1267.1,903.0 L1268.8,900.3 L1270.5,903.0 L1271.9,903.0 L1274.1,900.2 L1276.3,903.0 L1278.4,903.0 L1279.9,899.8 L1281.3,903.0 L1282.1,903.0 L1284.0,899.3 L1286.0,903.0 L1293.0,903.0 L1441.0,903.0 L1441.0,903.2 L0.0,903.2 Z" fill="#f6ecd0"/><path d="M0.0,860.0 L2.0,885.0 L4.0,890.0 L6.0,832.0 L8.0,895.0 L10.0,900.0 L15.0,903.0 L16.0,903.0 L17.7,899.7 L19.4,903.0 L27.5,903.0 L29.3,901.1 L31.1,903.0 L33.0,903.0 L34.9,899.8 L36.8,903.0 L42.1,903.0 L44.3,901.7 L46.5,903.0 L48.9,903.0 L50.8,900.9 L52.6,903.0 L54.6,903.0 L56.3,900.8 L57.9,903.0 L60.0,903.0 L61.6,896.4 L63.1,903.0 L67.2,903.0 L68.5,900.2 L69.8,903.0 L79.2,903.0 L81.5,901.2 L83.9,903.0 L86.2,903.0 L88.5,901.6 L90.9,903.0 L92.2,903.0 L93.7,897.9 L95.2,903.0 L104.5,903.0 L105.9,901.4 L107.3,903.0 L113.7,903.0 L115.9,901.0 L118.1,903.0 L119.5,903.0 L121.9,901.0 L124.2,903.0 L124.8,903.0 L126.9,901.5 L129.1,903.0 L131.2,903.0 L132.7,901.9 L134.2,903.0 L137.5,903.0 L140.0,901.8 L142.4,903.0 L144.3,903.0 L145.6,895.6 L146.9,903.0 L155.6,903.0 L156.9,900.2 L158.3,903.0 L158.8,903.0 L160.5,902.1 L162.2,903.0 L171.1,903.0 L172.8,900.3 L174.5,903.0 L183.9,903.0 L186.1,901.7 L188.2,903.0 L201.9,903.0 L203.2,900.2 L204.6,903.0 L212.5,903.0 L214.5,901.0 L216.5,903.0 L222.3,903.0 L224.5,900.1 L226.7,903.0 L231.2,903.0 L233.0,885.0 L234.8,903.0 L243.2,903.0 L245.0,891.0 L246.8,903.0 L251.2,903.0 L253.0,895.0 L254.8,903.0 L258.7,903.0 L260.1,899.3 L261.4,903.0 L264.2,903.0 L266.0,888.0 L267.8,903.0 L268.0,903.0 L269.8,901.1 L271.5,903.0 L273.2,903.0 L274.7,901.6 L276.2,903.0 L281.7,903.0 L283.4,899.0 L285.1,903.0 L285.2,903.0 L287.0,895.0 L288.8,903.0 L289.2,903.0 L291.0,813.0 L292.8,903.0 L295.4,903.0 L297.0,895.6 L298.7,903.0 L315.9,903.0 L317.6,901.6 L319.4,903.0 L319.8,903.0 L321.4,899.6 L323.0,903.0 L323.6,903.0 L325.4,900.9 L327.1,903.0 L336.4,903.0 L338.7,898.7 L341.1,903.0 L343.1,903.0 L345.1,898.6 L347.1,903.0 L347.2,903.0 L349.2,896.1 L351.3,903.0 L351.9,903.0 L353.4,901.9 L354.9,903.0 L356.8,903.0 L359.2,901.9 L361.6,903.0 L363.6,903.0 L365.5,897.8 L367.5,903.0 L378.7,903.0 L380.6,899.8 L382.5,903.0 L384.3,903.0 L386.2,897.9 L388.2,903.0 L388.8,903.0 L390.7,901.9 L392.5,903.0 L403.2,903.0 L405.0,898.5 L406.8,903.0 L412.7,903.0 L415.2,901.1 L417.6,903.0 L421.7,903.0 L423.8,900.3 L425.9,903.0 L428.2,903.0 L430.1,894.2 L431.9,903.0 L439.1,903.0 L440.8,898.2 L442.5,903.0 L448.0,903.0 L449.7,901.1 L451.5,903.0 L471.1,903.0 L472.7,901.4 L474.3,903.0 L480.1,903.0 L482.4,899.6 L484.8,903.0 L486.1,903.0 L487.3,901.5 L488.6,903.0 L517.0,903.0 L519.2,902.1 L521.5,903.0 L529.9,903.0 L531.7,891.0 L533.5,903.0 L534.0,903.0 L535.6,901.1 L537.2,903.0 L543.1,903.0 L544.3,900.5 L545.6,903.0 L554.2,903.0 L556.0,887.0 L557.8,903.0 L558.9,903.0 L560.7,888.0 L562.5,903.0 L562.7,903.0 L564.7,902.0 L566.7,903.0 L567.3,903.0 L568.5,902.2 L569.7,903.0 L571.4,903.0 L572.7,895.4 L574.0,903.0 L576.2,903.0 L578.3,902.2 L580.5,903.0 L583.6,903.0 L585.8,899.2 L587.9,903.0 L601.2,903.0 L603.0,888.0 L604.8,903.0 L605.5,903.0 L607.8,900.1 L610.0,903.0 L610.2,903.0 L611.6,899.6 L613.1,903.0 L617.4,903.0 L619.2,900.5 L620.9,903.0 L622.6,903.0 L624.3,899.0 L626.0,903.0 L630.8,903.0 L633.3,899.1 L635.7,903.0 L640.5,903.0 L642.6,894.9 L644.8,903.0 L646.8,903.0 L649.3,900.3 L651.8,903.0 L656.8,903.0 L658.5,897.8 L660.1,903.0 L669.4,903.0 L671.1,901.6 L672.9,903.0 L679.0,903.0 L681.3,898.6 L683.5,903.0 L697.7,903.0 L699.6,902.0 L701.5,903.0 L703.5,903.0 L705.9,899.4 L708.3,903.0 L715.6,903.0 L717.8,899.4 L720.0,903.0 L721.2,903.0 L723.4,898.9 L725.6,903.0 L738.2,903.0 L739.6,901.8 L741.1,903.0 L742.8,903.0 L744.5,900.5 L746.3,903.0 L747.6,903.0 L750.1,902.1 L752.6,903.0 L753.5,903.0 L755.7,900.2 L757.9,903.0 L763.4,903.0 L765.7,893.0 L768.1,903.0 L784.5,903.0 L786.0,901.4 L787.5,903.0 L787.9,903.0 L789.8,901.4 L791.8,903.0 L793.9,903.0 L796.3,895.6 L798.7,903.0 L798.9,903.0 L800.2,900.5 L801.6,903.0 L804.0,903.0 L806.0,899.8 L808.0,903.0 L813.6,903.0 L816.1,901.2 L818.5,903.0 L821.0,903.0 L822.5,901.4 L824.1,903.0 L840.9,903.0 L843.1,901.2 L845.3,903.0 L850.5,903.0 L851.8,898.7 L853.2,903.0 L854.0,903.0 L855.8,901.2 L857.6,903.0 L858.1,903.0 L860.1,901.2 L862.2,903.0 L864.8,903.0 L866.3,896.2 L867.8,903.0 L874.8,903.0 L876.1,900.3 L877.5,903.0 L883.7,903.0 L885.9,900.7 L888.2,903.0 L891.8,903.0 L894.0,901.4 L896.1,903.0 L897.5,903.0 L899.0,897.4 L900.6,903.0 L901.6,903.0 L903.9,900.9 L906.2,903.0 L907.0,903.0 L908.6,900.1 L910.2,903.0 L912.5,903.0 L913.8,893.8 L915.0,903.0 L919.9,903.0 L921.5,900.8 L923.0,903.0 L923.5,903.0 L926.0,893.0 L928.5,903.0 L930.8,903.0 L933.2,900.8 L935.5,903.0 L943.6,903.0 L945.9,901.5 L948.2,903.0 L949.5,903.0 L951.9,900.4 L954.3,903.0 L954.8,903.0 L956.3,901.2 L957.7,903.0 L962.2,903.0 L964.2,901.3 L966.2,903.0 L969.2,903.0 L971.0,888.0 L972.8,903.0 L976.9,903.0 L979.1,901.4 L981.2,903.0 L992.0,903.0 L994.4,901.5 L996.8,903.0 L1000.8,903.0 L1002.5,897.9 L1004.1,903.0 L1004.5,903.0 L1005.8,899.7 L1007.0,903.0 L1008.3,903.0 L1009.6,900.1 L1011.0,903.0 L1017.4,903.0 L1019.1,899.0 L1020.7,903.0 L1022.6,903.0 L1025.1,897.4 L1027.5,903.0 L1028.7,903.0 L1030.6,900.0 L1032.5,903.0 L1035.2,903.0 L1037.0,886.0 L1038.8,903.0 L1040.4,903.0 L1042.5,901.3 L1044.6,903.0 L1045.1,903.0 L1047.0,899.7 L1049.0,903.0 L1056.7,903.0 L1058.6,901.2 L1060.4,903.0 L1061.7,903.0 L1063.4,901.2 L1065.1,903.0 L1065.5,903.0 L1066.9,897.6 L1068.2,903.0 L1076.2,903.0 L1078.0,870.0 L1079.8,903.0 L1082.9,903.0 L1085.1,895.8 L1087.3,903.0 L1088.1,903.0 L1089.9,900.7 L1091.7,903.0 L1103.4,903.0 L1105.9,900.0 L1108.3,903.0 L1110.6,903.0 L1112.7,900.4 L1114.7,903.0 L1115.6,903.0 L1117.4,901.4 L1119.1,903.0 L1120.4,903.0 L1122.8,901.2 L1125.3,903.0 L1143.5,903.0 L1145.5,896.3 L1147.5,903.0 L1148.2,903.0 L1150.6,900.4 L1153.0,903.0 L1153.8,903.0 L1155.1,899.4 L1156.5,903.0 L1161.5,903.0 L1163.4,900.2 L1165.3,903.0 L1165.7,903.0 L1167.2,901.2 L1168.8,903.0 L1169.8,903.0 L1171.1,900.9 L1172.5,903.0 L1177.7,903.0 L1179.1,899.4 L1180.6,903.0 L1182.4,903.0 L1184.3,899.9 L1186.3,903.0 L1187.5,903.0 L1189.0,900.9 L1190.5,903.0 L1191.8,903.0 L1193.0,899.7 L1194.2,903.0 L1197.8,903.0 L1199.4,900.1 L1200.9,903.0 L1203.4,903.0 L1204.8,898.5 L1206.2,903.0 L1209.7,903.0 L1211.5,900.5 L1213.3,903.0 L1215.1,903.0 L1217.5,901.0 L1220.0,903.0 L1221.8,903.0 L1223.5,900.7 L1225.2,903.0 L1234.9,903.0 L1237.1,898.3 L1239.3,903.0 L1252.8,903.0 L1254.7,894.4 L1256.7,903.0 L1262.3,903.0 L1264.1,900.0 L1265.9,903.0 L1267.1,903.0 L1268.8,900.3 L1270.5,903.0 L1271.9,903.0 L1274.1,900.2 L1276.3,903.0 L1278.4,903.0 L1279.9,899.8 L1281.3,903.0 L1282.1,903.0 L1284.0,899.3 L1286.0,903.0 L1293.0,903.0 L1441.0,903.0" fill="none" stroke="#d6a400" stroke-width="1.1" stroke-linejoin="round"/><line x1="0" y1="903.2" x2="1441" y2="903.2" stroke="#d6a400" stroke-width="1.1"/></g>
</svg>
</body></html>
